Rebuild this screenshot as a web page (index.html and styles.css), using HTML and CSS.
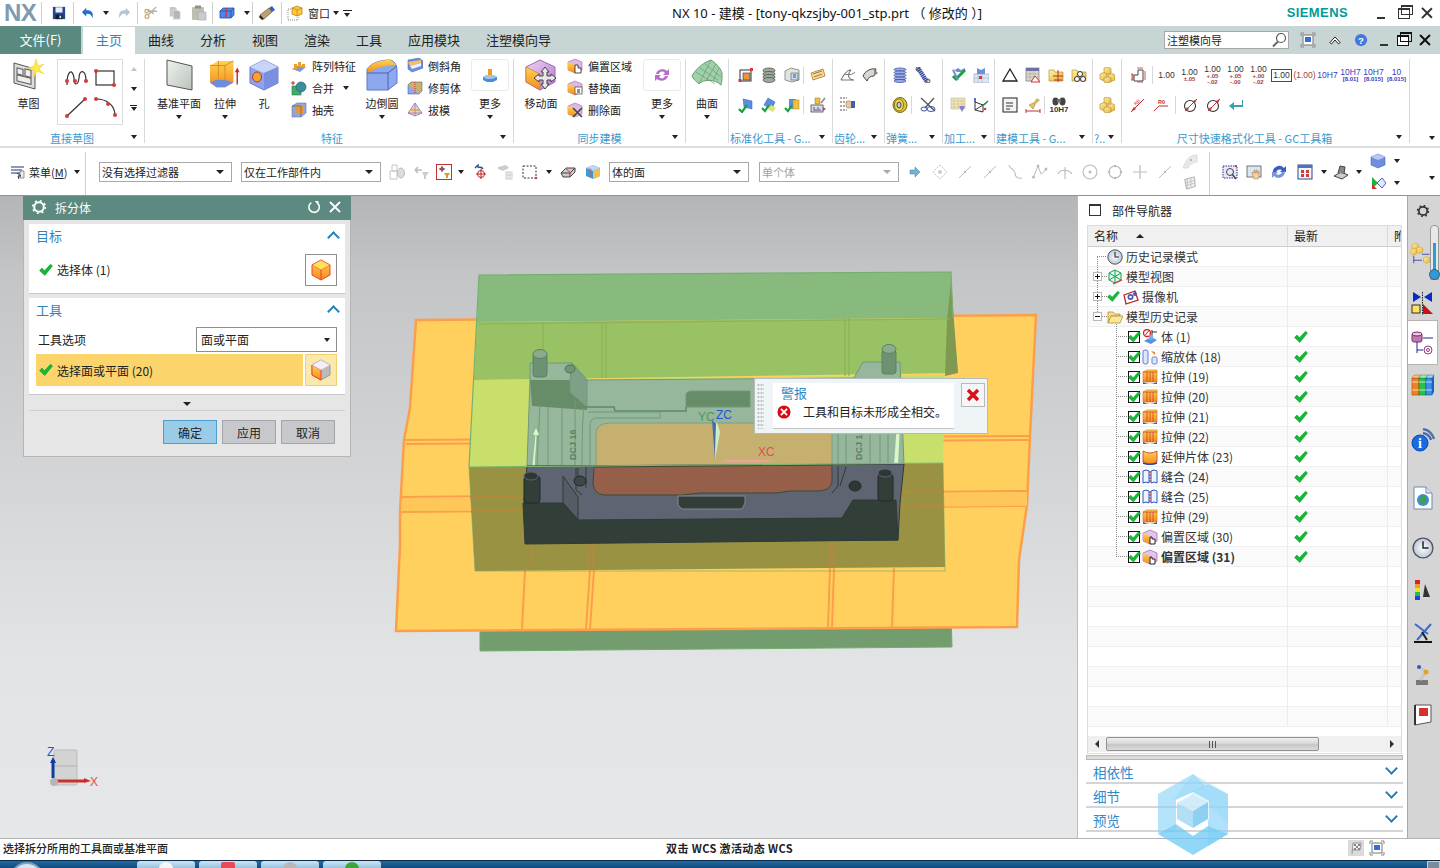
FILE: index.html
```html
<!DOCTYPE html>
<html lang="zh">
<head>
<meta charset="utf-8">
<title>NX 10 - 建模</title>
<link rel="stylesheet" href="styles.css">
</head>
<body>
<svg class="defs" width="0" height="0" aria-hidden="true">
<defs>
<linearGradient id="gOr" x1="0" y1="0" x2="0" y2="1"><stop offset="0" stop-color="#ffd34d"/><stop offset="1" stop-color="#f58a1f"/></linearGradient>
<linearGradient id="gBl" x1="0" y1="0" x2="1" y2="1"><stop offset="0" stop-color="#c9d9f7"/><stop offset="1" stop-color="#5d7fd8"/></linearGradient>
<linearGradient id="gPk" x1="0" y1="0" x2="1" y2="1"><stop offset="0" stop-color="#f0d2f2"/><stop offset="1" stop-color="#b07ad0"/></linearGradient>
<linearGradient id="gGy" x1="0" y1="0" x2="1" y2="1"><stop offset="0" stop-color="#eef2ee"/><stop offset="1" stop-color="#b9c4bb"/></linearGradient>
<linearGradient id="gYl" x1="0" y1="0" x2="1" y2="1"><stop offset="0" stop-color="#fff2a0"/><stop offset="1" stop-color="#e8b43a"/></linearGradient>
<radialGradient id="gCk"><stop offset="0" stop-color="#fff"/><stop offset="1" stop-color="#b8c6d8"/></radialGradient>

<symbol id="check" viewBox="0 0 14 13"><path d="M0.5 7 L3 4.6 L5.5 7.2 L11.5 0.8 L13.5 2.4 L5.8 12 Z" fill="#11bb33" stroke="#0a8f25" stroke-width=".5"/></symbol>
<symbol id="save" viewBox="0 0 16 16"><rect x="1" y="1" width="14" height="14" fill="#23468e"/><rect x="4" y="1.5" width="8" height="6" fill="#e8eef8"/><rect x="4" y="10" width="8" height="5" fill="#111b33"/><rect x="8.5" y="11" width="2" height="3" fill="#dde"/></symbol>
<symbol id="undo" viewBox="0 0 16 16"><path d="M1 7 L6 2 V5 C11 4 15 7 13 14 C12 10 10 8.500 6 9 V12 Z" fill="#1e6fd0"/></symbol>
<symbol id="redo" viewBox="0 0 16 16"><path d="M15 7 L10 2 V5 C5 4 1 7 3 14 C4 10 6 8.500 10 9 V12 Z" fill="#b9c4cc"/></symbol>
<symbol id="cut" viewBox="0 0 16 16"><path d="M14 1 L5 10 M15 6 L5 6 M11 9 L5 4" stroke="#aeb2a8" stroke-width="1.500" fill="none"/><circle cx="3.500" cy="12" r="2.200" fill="none" stroke="#c4b07a" stroke-width="1.500"/><circle cx="3" cy="6" r="2" fill="none" stroke="#c4b07a" stroke-width="1.500"/></symbol>
<symbol id="copy" viewBox="0 0 16 16"><path d="M2 1h6l2 2v9H2z" fill="#c5c9cc"/><path d="M6 5h6l2 2v8H6z" fill="#b2b6ba" stroke="#e8e8e8" stroke-width=".6"/></symbol>
<symbol id="paste" viewBox="0 0 16 16"><rect x="1" y="2" width="12" height="13" rx="1" fill="#bdbfb0"/><rect x="4" y="0.500" width="6" height="3" fill="#8f918a"/><rect x="7" y="7" width="8" height="8" fill="#c8ccd0" stroke="#9aa" stroke-width=".6"/></symbol>
<symbol id="sect" viewBox="0 0 16 16"><path d="M1 6 L4 3 H15 V10 L12 13 H1 Z" fill="#4f86e8" stroke="#1f4fb0" stroke-width=".8"/><path d="M1 6 H12 V13 M12 6 L15 3" fill="none" stroke="#1f4fb0" stroke-width=".8"/><path d="M7 3 V13" stroke="#e03030" stroke-width="1.400"/></symbol>
<symbol id="erase" viewBox="0 0 16 16"><path d="M1 10 L10 3 L13 7 L5 14 Z" fill="#c0a070" stroke="#6a5a40" stroke-width=".7"/><path d="M10 3 L13 1 L16 5 L13 7 Z" fill="#3060c0"/><path d="M1 10 L5 14 L3 15 L0 12Z" fill="#222"/></symbol>
<symbol id="win" viewBox="0 0 16 16"><rect x="1" y="4" width="10" height="11" fill="#fff" stroke="#888" stroke-dasharray="1 1"/><path d="M5 3 L10 1 L15 3 V9 L10 11 L5 9 Z" fill="#ffc83a" stroke="#b07a10" stroke-width=".7"/><path d="M5 3 L10 5 L15 3 M10 5V11" stroke="#b07a10" stroke-width=".6" fill="none"/></symbol>

<symbol id="sketch" viewBox="0 0 32 32"><path d="M1 4 L22 10 V30 L1 24 Z" fill="#ddd" stroke="#555"/><rect x="4" y="8" width="6" height="6" fill="#eee" stroke="#555" transform="skewY(14)"/><rect x="12" y="7" width="6" height="7" fill="#eee" stroke="#555" transform="skewY(14)"/><rect x="4" y="15" width="14" height="6" fill="#eee" stroke="#555" transform="skewY(14)"/><path d="M23 0 L25 7 L31 5 L26 10 L31 15 L24 12 L21 18 L21 11 L15 9 L21 7 Z" fill="#ffe84a" stroke="#e8c820" stroke-width=".5"/></symbol>
<symbol id="spline" viewBox="0 0 24 24"><path d="M3 19 C3 3 9 3 10 12 C10 20 14 20 15 12 C15 3 22 3 22 15" fill="none" stroke="#333" stroke-width="1.200"/><g fill="#d43a3a"><circle cx="3" cy="15" r="2"/><circle cx="11" cy="15" r="2"/><circle cx="22" cy="15" r="2"/></g></symbol>
<symbol id="rectS" viewBox="0 0 24 24"><rect x="3" y="5" width="18" height="14" fill="none" stroke="#333" stroke-width="1.200"/><circle cx="3" cy="5" r="2" fill="#d43a3a"/><circle cx="21" cy="19" r="2" fill="#d43a3a"/></symbol>
<symbol id="lineS" viewBox="0 0 24 24"><path d="M3 21 L21 4" stroke="#333" stroke-width="1.200"/><circle cx="3" cy="21" r="2" fill="#d43a3a"/><circle cx="21" cy="4" r="2" fill="#d43a3a"/></symbol>
<symbol id="arcS" viewBox="0 0 24 24"><path d="M3 4 C14 4 22 10 22 21" fill="none" stroke="#333" stroke-width="1.200"/><g fill="#d43a3a"><circle cx="3" cy="4" r="2"/><circle cx="15" cy="9" r="2"/><circle cx="22" cy="20" r="2"/></g></symbol>
<symbol id="plane" viewBox="0 0 32 32"><path d="M4 1 L29 7 V31 L4 26 Z" fill="url(#gGy)" stroke="#555" stroke-width="1"/></symbol>
<symbol id="extrude" viewBox="0 0 34 32"><path d="M1 6 L10 1 H26 V24 L17 29 H8 L1 24 Z" fill="url(#gOr)"/><path d="M10 1 V20 M17 6 V29 M1 6 H17 L26 1" fill="none" stroke="#d88a2c" stroke-width="1"/><path d="M1 24 L8 29 H17 L26 24 L17 21 L8 21 Z" fill="#6f8ed8"/><path d="M30 26 V12" stroke="#d02020" stroke-width="1.500"/><path d="M27.500 13 L30 8 L32.500 13Z" fill="#d02020"/></symbol>
<symbol id="hole" viewBox="0 0 32 32"><path d="M2 8 L16 1 L30 8 V24 L16 31 L2 24 Z" fill="#8ea4f0" stroke="#6a7cc0"/><path d="M2 8 L16 14 L30 8 L16 1Z" fill="#c8d4f8"/><path d="M16 14 V31 L30 24 V8Z" fill="#7a8fe0"/><ellipse cx="9" cy="18" rx="4.500" ry="5" fill="#f6a42c" stroke="#c23030"/></symbol>
<symbol id="edge" viewBox="0 0 32 32"><path d="M1 10 C6 3 16 1 24 1 C29 2 31 6 31 12 V24 L22 31 H1 Z" fill="#8ea8ee" stroke="#5d78c8"/><path d="M1 10 C6 3 16 1 24 1 C27 2 29 4 30 6 C22 6 10 8 3 14 Z" fill="url(#gOr)"/><path d="M1 14 H22 V31 M22 14 L31 7" fill="none" stroke="#4a62b0"/></symbol>
<symbol id="moreF" viewBox="0 0 16 14"><rect x="6" y="1" width="4" height="7" fill="#f49a28"/><path d="M1 9 L5 7 H11 L15 9 V12 L11 14 H5 L1 12Z" fill="#4a8ed0"/><path d="M5 7 H11 L15 9 L10 11 H5 L1 9Z" fill="#9ec6ea"/></symbol>
<symbol id="pattern" viewBox="0 0 16 16"><path d="M1 11 L8 7 L15 9 L9 14 Z" fill="#7a9ad8"/><g fill="#e8a030"><rect x="3" y="6" width="3" height="5"/><rect x="7" y="4" width="3" height="5"/><rect x="11" y="6" width="3" height="4"/></g></symbol>
<symbol id="unite" viewBox="0 0 16 16"><rect x="1" y="6" width="9" height="9" fill="#44aa66" stroke="#276" stroke-width=".6"/><circle cx="10" cy="7" r="5" fill="#3a8ea0" stroke="#256" stroke-width=".6"/><path d="M0 3H4M2 1V5" stroke="#d02020" stroke-width="1"/></symbol>
<symbol id="shell" viewBox="0 0 16 16"><path d="M1 4 L6 1 H15 V11 L10 15 H1Z" fill="#8da8dc" stroke="#667"  stroke-width=".5"/><rect x="5" y="4" width="7" height="7" fill="#e8953c"/><path d="M1 4 H10 V15" fill="none" stroke="#555" stroke-width=".6"/></symbol>
<symbol id="chamfer" viewBox="0 0 16 16"><path d="M1 2 L12 0 L16 3 V10 L5 14 L1 11Z" fill="#6f8ee0" stroke="#3a55a8" stroke-width=".5"/><path d="M1 4 L14 2 V5 L3 8Z" fill="#f4c060"/><path d="M3 8 L14 5 V8 L5 11Z" fill="#eef"/></symbol>
<symbol id="trim" viewBox="0 0 16 16"><rect x="1" y="5" width="11" height="9" fill="#8ea8ee" stroke="#4a62b0" stroke-width=".6"/><path d="M1 5 L4 2 H15 V11 L12 14" fill="#c8b070" stroke="#666" stroke-width=".6"/><path d="M8 2 V14" stroke="#d83030" stroke-dasharray="1 1"/></symbol>
<symbol id="draft" viewBox="0 0 16 16"><path d="M8 1 L15 11 L8 14 L1 11Z" fill="#cfd6ee" stroke="#6070a8" stroke-width=".7"/><path d="M8 1 V14 M1 11 L15 11" stroke="#d44" stroke-width=".6"/><path d="M3 8 L13 8" stroke="#f0a030" stroke-width="1.500"/></symbol>
<symbol id="offset" viewBox="0 0 16 16"><path d="M1 4 L8 1 L15 4 V12 L8 15 L1 12Z" fill="#e0b8e8" stroke="#8a4c90" stroke-width=".5"/><path d="M1 4 L8 7 V15 L1 12Z" fill="url(#gOr)"/><path d="M8 7 H11 V10 H14 V15 H8Z" fill="#fff" stroke="#222" stroke-width=".8"/></symbol>
<symbol id="replace" viewBox="0 0 16 16"><path d="M1 4 L8 1 L15 4 V12 L8 15 L1 12Z" fill="#e0b8e8" stroke="#8a4c90" stroke-width=".5"/><path d="M1 4 L8 7 V15 L1 12Z" fill="url(#gOr)"/><rect x="8" y="7" width="7" height="7" fill="#fff" stroke="#444" stroke-width=".7"/><path d="M10 10 H13 M10 12H13" stroke="#222"/></symbol>
<symbol id="deleteF" viewBox="0 0 16 16"><path d="M1 4 L8 1 L15 4 V12 L8 15 L1 12Z" fill="#e0b8e8" stroke="#8a4c90" stroke-width=".5"/><path d="M1 4 L8 7 V15 L1 12Z" fill="url(#gOr)"/><path d="M6 6 L15 15 M15 6 L6 15" stroke="#444" stroke-width="1.600"/></symbol>
<symbol id="move" viewBox="0 0 32 32"><path d="M1 8 L15 1 L30 8 V23 L15 31 L1 23Z" fill="url(#gPk)" stroke="#a066b0"/><path d="M1 8 L15 15 V31 L1 23Z" fill="url(#gOr)" stroke="#c8702c" stroke-width=".6"/><path d="M20 8 L24 13 H22 V17 H26 V15 L31 19 L26 23 V21 H22 V25 H24 L20 30 L16 25 H18 V21 H14 V23 L9 19 L14 15 V17 H18 V13 H16Z" fill="#e8e8e8" stroke="#444"/></symbol>
<symbol id="cycle" viewBox="0 0 16 16"><path d="M2 7 C3 2 10 1 13 4 L15 2 V8 H9 L11 6 C9 4 6 4 5 7Z" fill="#b86cc8"/><path d="M14 9 C13 14 6 15 3 12 L1 14 V8 H7 L5 10 C7 12 10 12 11 9Z" fill="#b86cc8"/></symbol>
<symbol id="surface" viewBox="0 0 32 32"><path d="M1 17 C6 8 14 3 20 1 C26 5 30 10 31 14 C31 20 31 23 30 26 C24 20 12 20 8 25 C5 22 2 20 1 17Z" fill="#9fd0a8" stroke="#6a9c78"/><g stroke="#5f9270" stroke-width=".6" fill="none"><path d="M5 13 L24 25 M9 9 L27 21 M14 5 L30 18"/><path d="M20 1 L8 25 M25 5 L15 22 M28 9 L22 22"/></g></symbol>

<symbol id="s1" viewBox="0 0 16 16"><rect x="2" y="3" width="11" height="11" fill="none" stroke="#333"/><rect x="5" y="6" width="7" height="7" fill="#e8953c" stroke="#333" stroke-width=".6"/><g fill="#d43a3a"><rect x="0.500" y="12" width="3" height="3"/><rect x="12" y="1" width="3" height="3"/></g></symbol>
<symbol id="s2" viewBox="0 0 16 16"><g fill="#9aab9a" stroke="#444" stroke-width=".7"><ellipse cx="8" cy="3.500" rx="6" ry="2.500"/><ellipse cx="8" cy="7" rx="6" ry="2.500"/><ellipse cx="8" cy="10" rx="6" ry="2.500"/><ellipse cx="8" cy="13" rx="6" ry="2.500"/></g></symbol>
<symbol id="s3" viewBox="0 0 16 16"><g fill="#dfe5df" stroke="#555" stroke-width=".6"><path d="M1 4 L7 1 L15 3 V13 L8 15 L1 13Z"/></g><rect x="7" y="6" width="7" height="7" fill="#c8d8f0" stroke="#446"  stroke-width=".5"/><path d="M9 8H12M9 10H12" stroke="#245" stroke-width=".8"/></symbol>
<symbol id="s4" viewBox="0 0 16 16"><path d="M1 6 L13 2 L15 9 L3 13Z" fill="#ffd88a" stroke="#9a6a20" stroke-width=".7"/><path d="M3 7 L12 4 M4 10L12 7" stroke="#666" stroke-width=".8"/></symbol>
<symbol id="s5" viewBox="0 0 16 16"><path d="M5 2 L14 4 V12 L6 10Z" fill="#5a8ee0" stroke="#2c5ab0" stroke-width=".5"/><path d="M1 12 L4 15 L9 8" stroke="#17a33a" stroke-width="2.200" fill="none"/></symbol>
<symbol id="s6" viewBox="0 0 16 16"><path d="M7 1 L14 5 L11 12 L3 8Z" fill="#5a8ee0" stroke="#2c5ab0" stroke-width=".5"/><path d="M10 8 L15 11 L12 15 L6 12Z" fill="#e0e080"/><path d="M1 11 L4 14 L8 8" stroke="#17a33a" stroke-width="2.200" fill="none"/></symbol>
<symbol id="s7" viewBox="0 0 16 16"><rect x="5" y="2" width="7" height="10" fill="#5a8ee0"/><rect x="9" y="3" width="6" height="9" fill="#f0c040" stroke="#b08020" stroke-width=".5"/><path d="M1 11 L4 14 L8 8" stroke="#17a33a" stroke-width="2.200" fill="none"/></symbol>
<symbol id="s8" viewBox="0 0 16 16"><rect x="1" y="8" width="12" height="7" fill="#ddd" stroke="#333" stroke-width=".7"/><path d="M3 11H5M7 11H9M3 13H11" stroke="#6040a0"/><path d="M5 1 H10 V7 H5Z" fill="#f0c040" stroke="#9a7010" stroke-width=".5"/><path d="M11 6 L15 1" stroke="#888" stroke-width="1.500"/><path d="M13 10 L16 12 L13 14Z" fill="#b040a0"/></symbol>
<symbol id="s9" viewBox="0 0 16 16"><path d="M1 13 C5 5 8 3 11 3 C8 6 7 12 13 13" fill="none" stroke="#555"/><path d="M4 8 C6 6 10 10 15 5" fill="none" stroke="#777"/><path d="M1 13H14" stroke="#777"/></symbol>
<symbol id="s10" viewBox="0 0 16 16"><path d="M1 9 C3 4 9 1 14 2 L12 9 C8 9 6 11 5 14 Z" fill="#d8d8d0" stroke="#444"/><path d="M12 2 L16 6 L12 9" fill="#888"/></symbol>
<symbol id="s11" viewBox="0 0 16 16"><path d="M0 1H7M0 5H7M0 9H7M0 13H7" stroke="#555" stroke-dasharray="2 1"/><rect x="6" y="4" width="6" height="7" rx="2" fill="#e8c8a0" stroke="#876"  stroke-width=".5"/><rect x="11" y="4" width="4" height="7" fill="#4a5ab0"/></symbol>
<symbol id="spring" viewBox="0 0 16 16"><g fill="#9ab0e8" stroke="#30409a" stroke-width=".7"><ellipse cx="8" cy="2.500" rx="6" ry="1.500"/><ellipse cx="8" cy="5.500" rx="6" ry="1.500"/><ellipse cx="8" cy="8.500" rx="6" ry="1.500"/><ellipse cx="8" cy="11.500" rx="6" ry="1.500"/><ellipse cx="8" cy="14" rx="6" ry="1.500"/></g></symbol>
<symbol id="spring2" viewBox="0 0 16 16"><path d="M3 1 L12 15" stroke="#3048a8" stroke-width="4.500" stroke-dasharray="1.500 .5"/><circle cx="3" cy="2" r="2" fill="none" stroke="#555"/><circle cx="13" cy="14" r="2" fill="none" stroke="#555"/></symbol>
<symbol id="washer" viewBox="0 0 16 16"><ellipse cx="8" cy="8" rx="7" ry="7.500" fill="#d8c040" stroke="#7a6a10"/><ellipse cx="7" cy="8" rx="4.500" ry="6" fill="#eed860" stroke="#8a7a10"/><ellipse cx="7" cy="8" rx="2" ry="3" fill="#ccc" stroke="#444"/></symbol>
<symbol id="clips" viewBox="0 0 16 16"><path d="M1 1 L15 14 M14 1 L5 11" stroke="#555" stroke-width="1.300"/><ellipse cx="11" cy="12" rx="4" ry="2.500" fill="none" stroke="#3a55a8"/><ellipse cx="4" cy="12" rx="3" ry="2" fill="none" stroke="#3a55a8"/></symbol>
<symbol id="m1" viewBox="0 0 16 16"><path d="M1 1 L5 3 L8 1 L11 3 L15 1 V5 L7 5 Z" fill="#6f8ed8"/><path d="M3 9 L6 12 L15 3" stroke="#17a33a" stroke-width="3" fill="none"/><path d="M3 3 L8 13" stroke="#6f8ed8" stroke-width="2"/></symbol>
<symbol id="m2" viewBox="0 0 16 16"><rect x="1" y="7" width="15" height="9" fill="#dfe7f4" stroke="#8a9ac0" stroke-width=".6"/><path d="M5 7V16M9 7V16M1 11H16" stroke="#9ab" stroke-width=".5"/><path d="M4 1 L8 3 L12 1 V7 H4Z" fill="#6f8ed8"/><rect x="6" y="9" width="3" height="3" fill="#d43a3a"/></symbol>
<symbol id="m3" viewBox="0 0 16 16"><rect x="1" y="1" width="14" height="11" fill="#f4e6a8" stroke="#aaa" stroke-width=".5"/><path d="M1 4H15M1 7H15M1 10H15M4 1V12M8 1V12M12 1V12" stroke="#bbb" stroke-width=".5"/><path d="M9 9 L15 9 L12 15Z" fill="#8a7ad0"/></symbol>
<symbol id="m4" viewBox="0 0 16 16"><path d="M2 5 L10 8 L15 4 M2 5 L2 13 L10 15 V8 M2 13 L10 8" fill="none" stroke="#333"/><path d="M11 8L15 4" stroke="#20a040" stroke-width="1.500"/><path d="M2 1V5" stroke="#2040c0" stroke-width="1.500"/><circle cx="12" cy="12" r="1.300" fill="#d43a3a"/></symbol>
<symbol id="tri" viewBox="0 0 16 16"><path d="M8 2 L15 14 H1Z" fill="none" stroke="#222" stroke-width="1.300"/></symbol>
<symbol id="table" viewBox="0 0 16 16"><rect x="1" y="1" width="13" height="13" fill="#dcd8c8" stroke="#777" stroke-width=".7"/><rect x="1" y="1" width="13" height="3" fill="#7070a8"/><path d="M1 7H14M1 10H14M5 4V14M9 4V14" stroke="#999" stroke-width=".5"/><path d="M10 9 L15 15 H6Z" fill="#fff" stroke="#d03030"/></symbol>
<symbol id="folderX" viewBox="0 0 16 16"><path d="M1 3 H6 L7 5 H15 V14 H1Z" fill="url(#gYl)" stroke="#a88530" stroke-width=".6"/><path d="M10 3V15M5 9H15M6 13H14" stroke="#c03030"/></symbol>
<symbol id="folderC" viewBox="0 0 16 16"><path d="M1 3 H6 L7 5 H15 V14 H1Z" fill="url(#gYl)" stroke="#a88530" stroke-width=".6"/><circle cx="6" cy="12" r="2.500" fill="#fff" stroke="#333"/><circle cx="12" cy="12" r="2.500" fill="#fff" stroke="#333"/><circle cx="9" cy="7" r="2.500" fill="#fff" stroke="#333"/></symbol>
<symbol id="notes" viewBox="0 0 16 16"><rect x="1" y="1" width="14" height="14" fill="#f4f4f4" stroke="#333" stroke-width="1.100"/><path d="M4 6H11M4 9H11M4 12H8" stroke="#333"/></symbol>
<symbol id="broom" viewBox="0 0 16 16"><path d="M1 14H15" stroke="#c03030"/><path d="M1 12V16M15 12V16" stroke="#c03030"/><path d="M12 1 L15 3 L10 8 L8 6Z" fill="#d8b860"/><path d="M4 8 L8 6 L10 8 L8 12 Z" fill="#e8c840" stroke="#876" stroke-width=".5"/></symbol>
<symbol id="binoc" viewBox="0 0 16 10"><ellipse cx="4" cy="5" rx="3.500" ry="4.500" fill="#444"/><ellipse cx="12" cy="5" rx="3.500" ry="4.500" fill="#444"/><rect x="6" y="2" width="4" height="4" fill="#777"/></symbol>
<symbol id="blocks" viewBox="0 0 16 16"><g fill="url(#gYl)" stroke="#a88530" stroke-width=".6"><path d="M5 1 L9 0 L12 1.500 V6 L8 7.500 L5 6Z"/><path d="M1 7 L5 5.500 L8 7 V12 L4 13.500 L1 12Z"/><path d="M9 8 L13 6.500 L16 8 V13 L12 14.500 L9 13Z"/><path d="M5 11 L9 9.500 L12 11 V15 L8 16 L5 15Z"/></g></symbol>
<symbol id="dimS" viewBox="0 0 16 16"><path d="M4 14 V8 H8 V3 H13 V14Z" fill="#fff" stroke="#444"/><path d="M1 7 H3 V13 H1 M2 7 V13" stroke="#c03030" fill="none" stroke-width=".8"/><path d="M7 1H13M7 15H13M15 4V13" stroke="#c03030" stroke-width=".8"/></symbol>
<symbol id="r1" viewBox="0 0 16 16"><path d="M1 15 L14 2" stroke="#c03030"/><path d="M1 15 L4 10 L6 12Z" fill="#c03030"/><text x="4" y="8" font-size="5" font-family="Liberation Sans" fill="#c03030" transform="rotate(-45 6 6)">R8</text></symbol>
<symbol id="r2" viewBox="0 0 16 16"><path d="M1 14 L6 9 H15" stroke="#c03030" fill="none"/><text x="5" y="7" font-size="5.500" font-weight="bold" font-family="Liberation Sans" fill="#c03030">R0</text></symbol>
<symbol id="d1" viewBox="0 0 16 16"><circle cx="8" cy="9" r="5.500" fill="none" stroke="#333" stroke-width="1.100"/><path d="M3 14 L15 2" stroke="#c03030"/><path d="M15 2 L11 4 L13 6Z M3 14 L7 12 L5 10Z" fill="#c03030"/></symbol>
<symbol id="ret" viewBox="0 0 16 16"><path d="M14 3 V8 H6 V5 L1 9 L6 13 V10 H15 V3Z" fill="#3aa0a8"/></symbol>

<symbol id="menuI" viewBox="0 0 16 16"><path d="M1 3H14M1 6H12M1 9H10" stroke="#6a7a9a" stroke-width="1.300"/><path d="M10 7 H14 V14 H10Z" fill="#eee" stroke="#555" stroke-width=".6"/><path d="M7 9 L11 12 L8 12 L9 15" fill="none" stroke="#333"/></symbol>
<symbol id="gr1" viewBox="0 0 16 16"><path d="M1 7H8V15H1Z M3 1 H8V7H3Z" fill="none" stroke="#c4c4c4"/><ellipse cx="12" cy="9" rx="3.500" ry="5" fill="#ddd" stroke="#bbb"/></symbol>
<symbol id="gr2" viewBox="0 0 16 16"><path d="M1 6 L4 3 M1 6 L4 9 M1 6 H8" stroke="#bbb" stroke-width="1.500"/><path d="M8 8 H15 L12 12 V15 L10 15 V12Z" fill="#ccc"/></symbol>
<symbol id="filt" viewBox="0 0 16 16"><rect x="0.500" y="0.500" width="15" height="15" fill="#fff" stroke="#c23030"/><path d="M6 2V8M3 5H9" stroke="#444"/><circle cx="6" cy="5" r="1.500" fill="none" stroke="#a33"/><path d="M8 9 H14 L12 12 V14 H10 V12Z" fill="#d8a020"/></symbol>
<symbol id="undoT" viewBox="0 0 16 16"><path d="M8 5V15M3 10H13" stroke="#c02020" stroke-width="1"/><circle cx="8" cy="10" r="3.500" fill="none" stroke="#c02020"/><path d="M2 4 L5 1 V3 C7 3 9 3 10 5" fill="none" stroke="#2a4a90" stroke-width="1.300"/></symbol>
<symbol id="gr3" viewBox="0 0 16 16"><path d="M1 3 L9 1 L12 4 L6 7 L1 5Z" fill="#ccc"/><rect x="9" y="8" width="6" height="7" fill="none" stroke="#ccc"/><path d="M11 8V15M13 8V15M9 11H15" stroke="#ccc"/></symbol>
<symbol id="rectSel" viewBox="0 0 16 16"><rect x="1" y="2" width="13" height="12" fill="none" stroke="#333" stroke-dasharray="2 1.500"/><circle cx="14" cy="14" r="1.300" fill="#d43a3a"/></symbol>
<symbol id="curve3d" viewBox="0 0 16 16"><path d="M1 9 L6 4 H15 L15 8 L10 13 H3Z" fill="#ccc" stroke="#444"/><path d="M1 9 H10 V13 M10 9 L15 4" fill="none" stroke="#444"/><path d="M5 4 L11 9" stroke="#d43a3a"/></symbol>
<symbol id="cube" viewBox="0 0 16 16"><path d="M1 4 L8 1 L15 4 V12 L8 15 L1 12Z" fill="#3a9ad8"/><path d="M1 4 L8 7 L15 4 L8 1Z" fill="#c0d8f8"/><path d="M8 7V15L15 12V4Z" fill="#f0c050"/><path d="M3 5H6V13" stroke="#e05050" fill="none" stroke-width=".7"/></symbol>
<symbol id="arrowB" viewBox="0 0 12 12"><path d="M1 4H6V1L11 6L6 11V8H1Z" fill="#6fb4d8" stroke="#4a7a98" stroke-width=".5"/></symbol>
<symbol id="gr4" viewBox="0 0 16 16"><path d="M8 1L11 4 15 8 11 12 8 15 5 12 1 8 5 4Z" fill="none" stroke="#bbb" stroke-dasharray="1.500 1"/><circle cx="8" cy="8" r="2" fill="#ccc"/></symbol>
<symbol id="gr5" viewBox="0 0 16 16"><path d="M2 14L14 2" stroke="#bbb"/><circle cx="8" cy="8" r="1.200" fill="#bbb"/></symbol>
<symbol id="gr6" viewBox="0 0 16 16"><path d="M2 1 C3 6 7 4 8 9 C8 13 11 15 15 14" fill="none" stroke="#bbb" stroke-width="1.100"/></symbol>
<symbol id="gr7" viewBox="0 0 16 16"><path d="M1 14L6 2L9 10L15 5" fill="none" stroke="#bbb"/><circle cx="6" cy="2" r="1.500" fill="#bbb"/><circle cx="1.500" cy="13" r="1.500" fill="#bbb"/><circle cx="14" cy="5" r="1.500" fill="#bbb"/></symbol>
<symbol id="gr8" viewBox="0 0 16 16"><path d="M8 3V15M1 10 C3 5 12 5 15 10" fill="none" stroke="#bbb" stroke-width="1.100"/></symbol>
<symbol id="gr9" viewBox="0 0 16 16"><circle cx="8" cy="8" r="7" fill="none" stroke="#bbb" stroke-width="1.100"/><circle cx="8" cy="8" r="1.500" fill="#bbb"/></symbol>
<symbol id="gr10" viewBox="0 0 16 16"><circle cx="8" cy="8" r="6" fill="none" stroke="#bbb" stroke-width="1.100"/><g fill="#bbb"><circle cx="8" cy="2" r="1.300"/><circle cx="8" cy="14" r="1.300"/><circle cx="2" cy="8" r="1.300"/><circle cx="14" cy="8" r="1.300"/></g></symbol>
<symbol id="gr11" viewBox="0 0 16 16"><path d="M8 1V15M1 8H15" stroke="#bbb" stroke-width="1.200"/></symbol>
<symbol id="gr12" viewBox="0 0 16 16"><path d="M1 14 C5 3 9 1 15 1 V8 C12 8 8 10 6 14Z" fill="#e8e8e8" stroke="#ddd"/><circle cx="9" cy="6" r="1" fill="#aaa"/></symbol>
<symbol id="gr13" viewBox="0 0 16 16"><path d="M2 4 L13 1 L14 12 L4 15Z" fill="#eee" stroke="#aaa"/><path d="M5 3V14M9 2V13M2 8L14 5M3 11L14 8" stroke="#aaa" stroke-width=".6"/></symbol>
<symbol id="v1" viewBox="0 0 16 16"><rect x="1" y="2" width="14" height="12" fill="#e8e8f4" stroke="#2030a0" stroke-dasharray="1.500 1"/><circle cx="8" cy="8" r="3.500" fill="none" stroke="#444"/><path d="M10 10L14 15" stroke="#444" stroke-width="1.400"/><rect x="13" y="1" width="2" height="2" fill="#d43a3a"/></symbol>
<symbol id="v2" viewBox="0 0 16 16"><rect x="1" y="2" width="14" height="11" fill="#dbe6f4" stroke="#777"/><path d="M8 15 C7 12 6 10 6 8 L8 9 V6 H9 V9 H10 V6 H11 V9 H12 V7 H13 V12 L12 15Z" fill="#f0d0a8" stroke="#a07040" stroke-width=".5"/></symbol>
<symbol id="v3" viewBox="0 0 16 16"><path d="M2 10 A6.500 6.500 0 0 1 13 4 L15 2 V8 H9 L11 6 A4 4 0 0 0 5 9Z" fill="#3a5ac8"/><path d="M14 7 A6.500 6.500 0 0 1 3 12 L1 14 V8 H7 L5 10 A4 4 0 0 0 11 8Z" fill="#7a96d8"/></symbol>
<symbol id="v4" viewBox="0 0 16 16"><rect x="1" y="1" width="14" height="14" fill="#f4f6fb" stroke="#2a4a90"/><rect x="1" y="1" width="14" height="3" fill="#4a72c8"/><g fill="#d43a3a"><rect x="4" y="6" width="3" height="3"/><rect x="9" y="6" width="3" height="3"/><rect x="4" y="10" width="3" height="3"/><rect x="9" y="10" width="3" height="3"/></g></symbol>
<symbol id="v5" viewBox="0 0 16 16"><path d="M1 12 L8 8 L15 11 L9 15 Z" fill="#ccc" stroke="#444"/><path d="M5 9 L7 2 L12 3 L11 10" fill="#888" stroke="#444"/></symbol>
<symbol id="v6" viewBox="0 0 16 16"><path d="M1 4 L8 1 L15 4 V12 L8 15 L1 12Z" fill="#6f8ee0" stroke="#3a55a8" stroke-width=".5"/><path d="M1 4 L8 7 L15 4 L8 1Z" fill="#b8c8f0"/></symbol>
<symbol id="v7" viewBox="0 0 16 16"><path d="M2 2 V14 L8 8Z" fill="#20b040"/><path d="M2 14 V9 L7 14Z" fill="#d03030"/><path d="M7 8 L12 3 L16 8 L12 13Z" fill="#e0e8fa" stroke="#4466c0"/></symbol>

<symbol id="clock" viewBox="0 0 16 16"><circle cx="8" cy="8" r="7.200" fill="url(#gCk)" stroke="#555"/><path d="M8 3V8H12" stroke="#222" fill="none" stroke-width="1.100"/></symbol>
<symbol id="mview" viewBox="0 0 16 16"><path d="M8 1 L14 4 V11 L8 14 L2 11 V4Z M2 4 L14 11 M14 4 L2 11 M8 1V14" fill="#e8f8ec" stroke="#14a05a" stroke-width="1"/><path d="M6 15 L15 11" stroke="#e03030" stroke-width="1.300"/></symbol>
<symbol id="cam" viewBox="0 0 16 16"><path d="M1 6 L12 2 L15 11 L3 15Z" fill="#fff" stroke="#c02020" stroke-width="1.300"/><circle cx="7.500" cy="8" r="3" fill="#4a5ab0"/><circle cx="7.500" cy="8" r="1.300" fill="#fff"/><circle cx="12" cy="5" r="2" fill="#4a5ab0"/></symbol>
<symbol id="folderO" viewBox="0 0 16 16"><path d="M1 3 H6 L8 5 H13 V7 H4 L1 14Z" fill="#f6dd8a" stroke="#a88530" stroke-width=".7"/><path d="M4 7 H16 L13 14 H1Z" fill="#fbe79a" stroke="#a88530" stroke-width=".7"/></symbol>
<symbol id="fBody" viewBox="0 0 16 16"><circle cx="5" cy="4" r="3.500" fill="#fff" stroke="#d02020" stroke-width="1.300"/><path d="M3 6.500 L7 1.500" stroke="#d02020"/><path d="M10 1V6M10 3H15" stroke="#333"/><path d="M2 12 L9 8 L15 11 L9 15Z" fill="#5a8ee0"/><rect x="7" y="6" width="4" height="5" fill="#7aaae8"/></symbol>
<symbol id="fScale" viewBox="0 0 16 16"><rect x="1" y="1" width="5" height="14" rx="2" fill="#dce6fa" stroke="#6a7ad8"/><rect x="10" y="8" width="5" height="7" rx="1.500" fill="#dce6fa" stroke="#6a7ad8"/><path d="M9 2 L13 6 L13 3Z" fill="#f08020"/></symbol>
<symbol id="fExt" viewBox="0 0 16 16"><path d="M1 3 L5 1 H15 V13 H1Z" fill="url(#gOr)" stroke="#d07020" stroke-width=".6"/><path d="M5 3V13M8 3V13M11 3V13M1 3H15" stroke="#c03030" stroke-width=".7"/><path d="M1 13 Q8 17 15 13 V15 H1Z" fill="#3a5ac0"/></symbol>
<symbol id="fEx2" viewBox="0 0 16 16"><path d="M1 2 Q8 6 15 2 V13 Q8 17 1 13Z" fill="url(#gOr)" stroke="#c03030" stroke-width=".8"/><path d="M1 14 Q8 17 15 14" stroke="#2a4ab0" stroke-width="1.400" fill="none"/></symbol>
<symbol id="fSew" viewBox="0 0 16 16"><path d="M1 2 Q4 0 7 2 V14 Q4 12 1 14Z" fill="#eef4ff" stroke="#2a5ac0"/><path d="M15 2 Q12 0 9 2 V14 Q12 12 15 14Z" fill="#eef4ff" stroke="#2a5ac0"/><path d="M7 3H9M7 6H9M7 9H9M7 12H9" stroke="#c02020" stroke-width="1.100"/></symbol>
<symbol id="fOff" viewBox="0 0 16 16"><path d="M1 4 L8 1 L15 4 V12 L8 15 L1 12Z" fill="#e6c3ec" stroke="#8a4c90" stroke-width=".6"/><path d="M1 4 L8 7 V15 L1 12Z" fill="url(#gOr)"/><path d="M8 8 H10 V10 H13 V15 H8Z" fill="#fff" stroke="#222"/></symbol>
<symbol id="cubeY" viewBox="0 0 22 22"><path d="M2 6 L11 1 L20 6 V16 L11 21 L2 16Z" fill="url(#gOr)" stroke="#ef4030"/><path d="M2 6 L11 11 L20 6 L11 1Z" fill="#ffe25c" stroke="#ef4030" stroke-width=".5"/><path d="M11 11V21" stroke="#ef4030"/></symbol>
<symbol id="cubeW" viewBox="0 0 22 22"><path d="M2 6 L11 1 L20 6 V16 L11 21 L2 16Z" fill="#bbb" stroke="#999"/><path d="M2 6 L11 11 V21 L2 16Z" fill="url(#gOr)" stroke="#ef4030"/><path d="M2 6 L11 11 L20 6 L11 1Z" fill="#f4eef8" stroke="#c8b8d8" stroke-width=".5"/></symbol>
<symbol id="gear" viewBox="0 0 16 16"><circle cx="8" cy="8" r="4.800" fill="none" stroke="currentColor" stroke-width="2"/><circle cx="8" cy="8" r="6.300" fill="none" stroke="currentColor" stroke-width="1.600" stroke-dasharray="2 2.950"/></symbol>
<symbol id="tAsm" viewBox="0 0 32 32"><g fill="url(#gYl)" stroke="#c89a20" stroke-width=".7"><path d="M3 2 L7 0 L11 2 V7 L7 9 L3 7Z"/><path d="M1 9 L5 7 L9 9 V14 L5 16 L1 14Z"/><path d="M9 7 L13 5 L17 7 V12 L13 14 L9 12Z"/><path d="M18 20 L22 18 L26 20 V25 L22 27 L18 25Z"/></g><path d="M16 15 H26 M5 17 V27 M5 23 H16" stroke="#1a2a9a" fill="none"/></symbol>
<symbol id="tCon" viewBox="0 0 24 24"><path d="M2 1 L10 6 L2 11Z M21 1 L13 6 L21 11Z" fill="#0d28c8"/><rect x="1" y="14" width="8" height="8" fill="#ffe15a" stroke="#333"/><path d="M12 13 V23 H22Z" fill="#c01414"/><path d="M11.500 1V24" stroke="#222" stroke-dasharray="1.500 1"/></symbol>
<symbol id="tDb" viewBox="0 0 24 24"><rect x="1" y="2" width="10" height="9" rx="2" fill="#c07cb0" stroke="#7a2a6a"/><ellipse cx="6" cy="3" rx="5" ry="2" fill="#ecc8e0" stroke="#7a2a6a"/><path d="M12 7H22M6 11V22M6 19H12" stroke="#1a2a9a" fill="none"/><circle cx="17" cy="19" r="4" fill="none" stroke="#8a3a80"/><circle cx="17" cy="19" r="1.500" fill="none" stroke="#8a3a80"/></symbol>
<symbol id="tBooks" viewBox="0 0 24 22"><rect x="1" y="4" width="7" height="17" fill="#f08020" stroke="#a04a10" stroke-width=".6"/><path d="M1 4 L3 1 H10 L8 4Z" fill="#f8c080" stroke="#a04a10" stroke-width=".4"/><path d="M1 8H8M1 16H8" stroke="#fff" stroke-width=".7"/><rect x="8" y="4" width="7" height="17" fill="#2cc04a" stroke="#108020" stroke-width=".6"/><path d="M8 4 L10 1 H17 L15 4Z" fill="#a8e8b0" stroke="#108020" stroke-width=".4"/><path d="M8 8H15M8 16H15" stroke="#fff" stroke-width=".7"/><rect x="15" y="4" width="6" height="17" fill="#3a90ea" stroke="#1050a0" stroke-width=".6"/><path d="M15 4 L17 1 H23 L21 4Z" fill="#a8d0f8" stroke="#1050a0" stroke-width=".4"/><path d="M21 4 L23 1 V18 L21 21Z" fill="#2060c0"/><path d="M15 8H21M15 16H21" stroke="#fff" stroke-width=".7"/></symbol>
<symbol id="tInfo" viewBox="0 0 24 24"><circle cx="9" cy="15" r="8" fill="#1a6ae0" stroke="#0a4ab0"/><text x="9" y="20" font-size="14" font-weight="bold" text-anchor="middle" font-family="Liberation Serif" fill="#fff">i</text><path d="M12 5 A10 10 0 0 1 20 12 M12 1 A14 14 0 0 1 23 11" fill="none" stroke="#4e6ea8" stroke-width="2.400"/></symbol>
<symbol id="tWeb" viewBox="0 0 20 24"><path d="M1 1H13L19 7V23H1Z" fill="#fff" stroke="#6a8ab0"/><path d="M13 1V7H19" fill="#d8e4f4" stroke="#6a8ab0"/><circle cx="10" cy="14" r="6" fill="#3a8ed8"/><path d="M7 11 L12 10 L14 14 L10 19 L7 15Z" fill="#43a048"/></symbol>
<symbol id="tColor" viewBox="0 0 20 22"><rect x="2" y="1" width="5" height="4" fill="#e02020"/><rect x="2" y="5" width="5" height="4" fill="#f0a020"/><rect x="2" y="9" width="5" height="4" fill="#f0e020"/><rect x="2" y="13" width="5" height="4" fill="#20c040"/><rect x="2" y="17" width="5" height="4" fill="#2040e0"/><path d="M12 5 L17 18 H10Z" fill="#333"/></symbol>
<symbol id="tRobot" viewBox="0 0 22 22"><path d="M3 2 L16 12 M19 2 L5 18" stroke="#3a6ad0" stroke-width="2"/><path d="M2 20 H20" stroke="#111" stroke-width="2"/><path d="M10 10 L15 18" stroke="#222" stroke-width="2"/></symbol>
<symbol id="tArm" viewBox="0 0 22 22"><rect x="4" y="16" width="12" height="5" fill="#777"/><path d="M8 16 L14 8 L7 3" stroke="#c8c8c8" stroke-width="3" fill="none"/><circle cx="14" cy="8" r="2.500" fill="#e8a020"/><circle cx="7" cy="3" r="2" fill="#2a5ac0"/></symbol>
<symbol id="tBook" viewBox="0 0 22 22"><path d="M3 1H19V18L3 21Z" fill="#fff" stroke="#555"/><rect x="7" y="4" width="9" height="8" fill="#d83030"/><path d="M3 1V21" stroke="#333" stroke-width="2"/></symbol>
<symbol id="frame" viewBox="0 0 16 16"><path d="M1 4V1H4M12 1H15V4M15 12V15H12M4 15H1V12" fill="none" stroke="#888"/><rect x="3" y="3" width="10" height="10" fill="#fff" stroke="#777"/><rect x="5" y="5" width="6" height="5" fill="#3a6ad8"/></symbol>
</defs>
</svg>

<header class="titlebar">
  <div class="qat">
    <span class="nx">NX</span><i class="bar"></i>
    <div class="q w31 pl3"><svg class="i14"><use href="#save"/></svg></div><i class="bar"></i>
    <div class="q w28"><svg class="i14"><use href="#undo"/></svg></div><i class="tri w8"></i><div class="q w27"><svg class="i14"><use href="#redo"/></svg></div><i class="bar"></i>
    <div class="q w26"><svg class="i14"><use href="#cut"/></svg></div><div class="q w22"><svg class="i14"><use href="#copy"/></svg></div><div class="q w26"><svg class="i16"><use href="#paste"/></svg></div><i class="bar"></i>
    <div class="q w28"><svg class="i16"><use href="#sect"/></svg></div><i class="tri w11"></i><i class="bar"></i>
    <div class="q w28"><svg class="i16"><use href="#erase"/></svg></div><i class="bar"></i>
    <div class="q w25"><svg class="i16"><use href="#win"/></svg></div><span class="qat-text">窗口</span><i class="tri w12"></i><span class="custom"></span>
  </div>
  <div class="doc-title">NX 10 - 建模 - [tony-qkzsjby-001_stp.prt （ 修改的 ）]</div>
  <div class="siemens">SIEMENS</div>
  <div class="winbtns"><i class="wb-min"></i><i class="wb-max"></i><i class="wb-close"></i></div>
</header>

<nav class="tabs">
  <div class="tab file">文件(F)</div>
  <div class="tab active">主页</div>
  <div class="tab">曲线</div>
  <div class="tab">分析</div>
  <div class="tab">视图</div>
  <div class="tab">渲染</div>
  <div class="tab">工具</div>
  <div class="tab">应用模块</div>
  <div class="tab tab-last">注塑模向导</div>
  <div class="tabs-right">
    <div class="search"><span>注塑模向导</span><svg class="i16" viewBox="0 0 16 16"><circle cx="10" cy="6" r="4.500" fill="#fff" stroke="#555" stroke-width="1.200"/><path d="M7 9.500 L2 14.500" stroke="#666" stroke-width="2"/></svg></div>
    <svg class="i16 fr-top"><use href="#frame"/></svg>
    <svg class="i14 tb-ic" viewBox="0 0 16 16"><path d="M2 11 L8 4.500 L14 11 L12 12.500 L8 8 L4 12.500Z" fill="#fff" stroke="#222" stroke-width="1.100"/></svg>
    <svg class="i14 tb-ic" viewBox="0 0 16 16"><circle cx="8" cy="8" r="7" fill="#4478e0"/><text x="8" y="12" font-size="11" font-weight="bold" text-anchor="middle" font-family="Liberation Sans" fill="#fff">?</text></svg>
    <div class="winbtns inner"><i class="wb-min"></i><i class="wb-max"></i><i class="wb-close"></i></div>
  </div>
</nav>

<section class="ribbon">
  <div class="g g1">
    <div class="g-body">
      <div class="big w57"><svg class="ic32"><use href="#sketch"/></svg><span class="lab">草图</span></div>
      <div class="gallery"><svg class="i24"><use href="#spline"/></svg><svg class="i24"><use href="#rectS"/></svg><svg class="i24"><use href="#lineS"/></svg><svg class="i24"><use href="#arcS"/></svg></div>
      <div class="gal-nav"><i class="tri up light"></i><i class="tri"></i><i class="tri lined"></i></div>
    </div>
    <div class="g-foot"><span>直接草图</span><i class="tri"></i></div>
  </div>
  <div class="g g2">
    <div class="g-body">
      <div class="big w56"><svg class="ic32"><use href="#plane"/></svg><span class="lab">基准平面</span><i class="tri"></i></div>
      <div class="big w36"><svg class="ic32"><use href="#extrude"/></svg><span class="lab">拉伸</span><i class="tri"></i></div>
      <div class="big w42"><svg class="ic32"><use href="#hole"/></svg><span class="lab">孔</span></div>
      <div class="smalls w77 col-a">
        <div class="sm"><svg class="i16"><use href="#pattern"/></svg><span>阵列特征</span></div>
        <div class="sm"><svg class="i16"><use href="#unite"/></svg><span>合并</span><i class="tri"></i></div>
        <div class="sm"><svg class="i16"><use href="#shell"/></svg><span>抽壳</span></div>
      </div>
      <div class="big w40"><svg class="ic32"><use href="#edge"/></svg><span class="lab">边倒圆</span><i class="tri"></i></div>
      <div class="smalls w66 col-b">
        <div class="sm"><svg class="i16"><use href="#chamfer"/></svg><span>倒斜角</span></div>
        <div class="sm"><svg class="i16"><use href="#trim"/></svg><span>修剪体</span></div>
        <div class="sm"><svg class="i16"><use href="#draft"/></svg><span>拔模</span></div>
      </div>
      <div class="big more"><div class="morebox"><svg class="i16"><use href="#moreF"/></svg></div><span class="lab">更多</span><i class="tri"></i></div>
    </div>
    <div class="g-foot"><span>特征</span><i class="tri"></i></div>
  </div>
  <div class="g g3">
    <div class="g-body">
      <div class="big w54"><svg class="ic32"><use href="#move"/></svg><span class="lab">移动面</span></div>
      <div class="smalls w73 tight">
        <div class="sm"><svg class="i16"><use href="#offset"/></svg><span>偏置区域</span></div>
        <div class="sm"><svg class="i16"><use href="#replace"/></svg><span>替换面</span></div>
        <div class="sm"><svg class="i16"><use href="#deleteF"/></svg><span>删除面</span></div>
      </div>
      <div class="big more"><div class="morebox"><svg class="i16"><use href="#cycle"/></svg></div><span class="lab">更多</span><i class="tri"></i></div>
    </div>
    <div class="g-foot"><span>同步建模</span><i class="tri"></i></div>
  </div>
  <div class="g g4">
    <div class="g-body"><div class="big w42"><svg class="ic32"><use href="#surface"/></svg><span class="lab">曲面</span><i class="tri"></i></div></div>
    <div class="g-foot empty"></div>
  </div>
  <div class="g g5">
    <div class="rows pl5">
      <div class="row"><div class="c"><svg class="i16"><use href="#s1"/></svg></div><div class="c"><svg class="i16"><use href="#s2"/></svg></div><div class="c"><svg class="i16"><use href="#s3"/></svg></div><i class="vsep"></i><div class="c w28"><svg class="i16"><use href="#s4"/></svg></div></div>
      <div class="row"><div class="c"><svg class="i16"><use href="#s5"/></svg></div><div class="c"><svg class="i16"><use href="#s6"/></svg></div><div class="c"><svg class="i16"><use href="#s7"/></svg></div><i class="vsep"></i><div class="c w28"><svg class="i16"><use href="#s8"/></svg></div></div>
    </div>
    <div class="g-foot left"><span>标准化工具 - G...</span><i class="tri"></i></div>
  </div>
  <div class="g g6">
    <div class="rows pl4">
      <div class="row"><div class="c w22"><svg class="i16"><use href="#s9"/></svg></div><div class="c w22"><svg class="i16"><use href="#s10"/></svg></div></div>
      <div class="row"><div class="c w22"><svg class="i16"><use href="#s11"/></svg></div></div>
    </div>
    <div class="g-foot left"><span>齿轮...</span><i class="tri"></i></div>
  </div>
  <div class="g g7">
    <div class="rows pl4">
      <div class="row"><div class="c w22"><svg class="i16"><use href="#spring"/></svg></div><div class="c w24"><svg class="i16"><use href="#spring2"/></svg></div></div>
      <div class="row"><div class="c w22"><svg class="i16"><use href="#washer"/></svg></div><i class="vsep"></i><div class="c w32"><svg class="i16"><use href="#clips"/></svg></div></div>
    </div>
    <div class="g-foot left"><span>弹簧...</span><i class="tri"></i></div>
  </div>
  <div class="g g8">
    <div class="rows pl3">
      <div class="row"><div class="c"><svg class="i16"><use href="#m1"/></svg></div><div class="c w24"><svg class="i16"><use href="#m2"/></svg></div></div>
      <div class="row"><div class="c"><svg class="i16"><use href="#m3"/></svg></div><div class="c w24"><svg class="i16"><use href="#m4"/></svg></div></div>
    </div>
    <div class="g-foot left"><span>加工...</span><i class="tri"></i></div>
  </div>
  <div class="g g9">
    <div class="rows pl3">
      <div class="row"><div class="c"><svg class="i16"><use href="#tri"/></svg></div><div class="c"><svg class="i16"><use href="#table"/></svg></div><div class="c"><svg class="i16"><use href="#folderX"/></svg></div><div class="c"><svg class="i16"><use href="#folderC"/></svg></div></div>
      <div class="row"><div class="c"><svg class="i16"><use href="#notes"/></svg></div><div class="c"><svg class="i16"><use href="#broom"/></svg></div><i class="vsep"></i><div class="c w28"><span class="binoc"><svg class="bin"><use href="#binoc"/></svg><b>10H7</b></span></div></div>
    </div>
    <div class="g-foot left"><span>建模工具 - G...</span><i class="tri"></i></div>
  </div>
  <div class="g g10">
    <div class="rows">
      <div class="row"><div class="c w28"><svg class="i16"><use href="#blocks"/></svg></div></div>
      <div class="row"><div class="c w28"><svg class="i16"><use href="#blocks"/></svg></div></div>
    </div>
    <div class="g-foot left"><span>?..</span><i class="tri"></i></div>
  </div>
  <div class="g g11">
    <div class="rows pl4">
      <div class="row">
        <div class="c"><svg class="i16"><use href="#dimS"/></svg></div><i class="vsep"></i>
        <div class="c dim"><b class="dk">1.00</b></div>
        <div class="c dim"><b class="dk">1.00</b><em>±.05</em></div>
        <div class="c dim"><b class="dk">1.00</b><em>+.05</em><em>-.02</em></div>
        <div class="c dim"><b class="dk">1.00</b><em>+.05</em><em>-.00</em></div>
        <div class="c dim"><b class="dk">1.00</b><em>+.00</em><em>-.02</em></div>
        <div class="c dim"><b class="box">1.00</b></div>
        <div class="c dim"><b class="red">(1.00)</b></div>
        <div class="c dim"><b class="blue">10H7</b></div>
        <div class="c dim"><b class="blue">10H7</b><em class="blue">[8.01]</em></div>
        <div class="c dim"><b class="blue">10H7</b><em class="blue">[8.015]</em></div>
        <div class="c dim"><b class="blue">10</b><em class="blue">[8.015]</em></div>
      </div>
      <div class="row">
        <div class="c"><svg class="i16"><use href="#r1"/></svg></div>
        <div class="c"><svg class="i16"><use href="#r2"/></svg></div><i class="vsep"></i>
        <div class="c"><svg class="i16"><use href="#d1"/></svg></div>
        <div class="c"><svg class="i16"><use href="#d1"/></svg></div>
        <div class="c"><svg class="i16"><use href="#ret"/></svg></div>
      </div>
    </div>
    <div class="g-foot center"><span>尺寸快速格式化工具 - GC工具箱</span><i class="tri"></i></div>
  </div>
  <div class="g-end"><i class="tri"></i></div>
</section>

<section class="selbar">
  <svg class="i16 ml10"><use href="#menuI"/></svg>
  <span class="menu">菜单(<u>M</u>)</span><i class="tri w8"></i>
  <i class="bar tall ml4"></i>
  <div class="sel w133 ml13"><span>没有选择过滤器</span><i class="tri"></i></div>
  <div class="sel w140 ml9"><span>仅在工作部件内</span><i class="tri"></i></div>
  <div class="c w24 ml4"><svg class="i16"><use href="#gr1"/></svg></div>
  <div class="c w25"><svg class="i16"><use href="#gr2"/></svg></div>
  <div class="c w20"><svg class="i16"><use href="#filt"/></svg></div>
  <i class="tri w14"></i>
  <div class="c w25"><svg class="i16"><use href="#undoT"/></svg></div>
  <div class="c w24"><svg class="i16"><use href="#gr3"/></svg></div>
  <div class="c w26"><svg class="i16"><use href="#rectSel"/></svg></div>
  <i class="tri w12"></i>
  <div class="c w25"><svg class="i16"><use href="#curve3d"/></svg></div>
  <div class="c w26"><svg class="i16"><use href="#cube"/></svg></div>
  <div class="sel w140 ml3"><span>体的面</span><i class="tri"></i></div>
  <div class="sel w140 ml10 off"><span>单个体</span><i class="tri"></i></div>
  <div class="c w25 ml3"><svg class="i12"><use href="#arrowB"/></svg></div>
  <div class="c w25"><svg class="i16"><use href="#gr4"/></svg></div>
  <div class="c w25"><svg class="i16"><use href="#gr5"/></svg></div>
  <div class="c w25"><svg class="i16"><use href="#gr5"/></svg></div>
  <div class="c w25"><svg class="i16"><use href="#gr6"/></svg></div>
  <div class="c w25"><svg class="i16"><use href="#gr7"/></svg></div>
  <div class="c w25"><svg class="i16"><use href="#gr8"/></svg></div>
  <div class="c w25"><svg class="i16"><use href="#gr9"/></svg></div>
  <div class="c w25"><svg class="i16"><use href="#gr10"/></svg></div>
  <div class="c w25"><svg class="i16"><use href="#gr11"/></svg></div>
  <div class="c w25"><svg class="i16"><use href="#gr5"/></svg></div>
  <div class="stack w25"><svg class="i16"><use href="#gr12"/></svg><svg class="i14"><use href="#gr13"/></svg></div>
  <i class="bar tall ml7"></i>
  <div class="c w24 ml8"><svg class="i16"><use href="#v1"/></svg></div>
  <div class="c w24"><svg class="i16"><use href="#v2"/></svg></div>
  <div class="c w25"><svg class="i16"><use href="#v3"/></svg></div>
  <div class="c w28"><svg class="i16"><use href="#v4"/></svg></div>
  <i class="tri w10"></i>
  <div class="c w24"><svg class="i16"><use href="#v5"/></svg></div>
  <i class="tri w12"></i>
  <div class="stack w26"><svg class="i16"><use href="#v6"/></svg><svg class="i16"><use href="#v7"/></svg></div>
  <div class="tri-stack w12"><i class="tri"></i><i class="tri"></i></div>
  <i class="tri sel-end"></i>
</section>

<main class="work">
  <div class="canvas">
    <svg class="scene" viewBox="0 195 1077 643" width="1077" height="643">
      <polygon points="480,610 951,610 952,647 480,651" fill="#739c6f" stroke="#6fae6c"/>
      <polygon points="416,320 1036,315 1033,376 1030,436 1027,505 1019,560 1017,627 396,631 400,545 400,512 404,440 410,408" fill="#ffd05e" stroke="#fb9f4a" stroke-width="2.500"/>
      <g fill="none" stroke="#fb9f4a" stroke-width="2">
        <path d="M404 440 L1031 436 M406 444 L1030 440"/>
        <path d="M401 497 L1028 491 M400 512 L1028 506"/>
        <path d="M525 570 L522 629 M590 570 L586 629 M594 570 L590 629 M830 568 L828 627 M834 568 L832 627 M894 568 L892 627"/>
      </g>
      <polygon points="402,498 1027,492 1027,506 401,511" fill="#ffc65a"/>
      <polygon points="469,467 943,463 945,567 475,571" fill="#9a9243"/>
      <g fill="none" stroke="#b28a3e" stroke-width="2"><path d="M470 497 L944 491 M471 511 L944 506"/><path d="M532 543 L530 570 M590 543 L588 570 M594 543 L592 570 M831 540 L829 568 M835 540 L833 568"/></g>
      <polygon points="479,275 951,272 953,318 477,322" fill="#88ba7d"/>
      <polygon points="477,322 953,318 958,373 474,380" fill="#98c264"/>
      <polygon points="474,380 945,375 943,463 469,467" fill="#c8df6c"/>
      <polygon points="951,282 958,373 945,376 947,320" fill="#7f9a50"/>
      <g fill="none" stroke="#8fb158" stroke-width="1.200"><path d="M543 322 L543 378 M602 322 L602 378 M606 322 L606 378 M845 318 L845 376 M849 318 L849 376 M479 324 L950 319"/></g>
      <polyline points="469,467 479,275 951,272 953,318" fill="none" stroke="#74b06f" stroke-width="1.200"/>
      <polygon points="530,363 572,363 587,380 854,378 863,362 900,362 904,465 527,466 530,380" fill="#97b79c" stroke="#6f9a78"/>
      <polygon points="530,380 570,380 570,392 587,407 587,410 532,406" fill="#668c68"/>
      <polygon points="572,363 587,380 587,407 570,392 570,380" fill="#7ea086" stroke="#6f9a78"/>
      <rect x="533" y="353" width="14" height="24" rx="3" fill="#6c9272" stroke="#5a8262"/>
      <ellipse cx="540" cy="354" rx="7" ry="4.500" fill="#8aac8c" stroke="#5a8262"/>
      <ellipse cx="570" cy="369" rx="5" ry="4" fill="#709474" stroke="#4c7254"/>
      <rect x="882" y="350" width="14" height="24" rx="3" fill="#6c9272" stroke="#5a8262"/>
      <ellipse cx="889" cy="349" rx="7" ry="4.500" fill="#8aac8c" stroke="#5a8262"/>
      <path d="M686 407 V395 Q686 391 692 391 H750 V407Z" fill="#668c68" stroke="#6f9a78"/>
      <path d="M586 407 H614 L615 411 H686 V407" fill="none" stroke="#5f8a66" stroke-width="1.500"/>
      <path d="M588 412 H660 V418 H596 Q590 418 590 426 V466 M584 408 Q582 420 582 466 M575 400 V466 M562 407 V466 M548 407 V466 M540 405 L537 466" fill="none" stroke="#6f9a78"/>
      <path d="M880 408 V466 M888 408 V466 M897 408 V466 M838 430 V466 M846 420 V466 M870 410 V466" fill="none" stroke="#6f9a78"/>
      <text x="576" y="460" class="mold-mark" transform="rotate(-90 576 460)">DCJ 16</text>
      <text x="862" y="460" class="mold-mark" transform="rotate(-90 862 460)">DCJ 16</text>
      <path d="M596 466 V434 Q596 423 610 423 H822 Q832 423 832 433 V465Z" fill="#c6b070" stroke="#7da07c"/>
      <path d="M532 466 L535 435 L532 436 L536 427 L540 436 L537 435 L535 466Z" fill="#d8f8c8" stroke="#6f9a78" stroke-width=".5"/>
      <path d="M894 466 L897 422 L900 422 L898 466Z" fill="#d8f8c8"/>
      <polygon points="527,466 904,464 900,503 898,540 526,540 524,500" fill="#5f6472" stroke="#2f3a33"/>
      <path d="M594 467 L832 465 L832 482 Q830 491 818 491 L790 491 L776 493 L700 493 L682 495 L604 495 Q594 494 593 484Z" fill="#965f49" stroke="#384a3e"/>
      <path d="M576 468 V490 L582 495 M578 468 L578 486 M586 467 V488 M838 466 V486 L832 493 M846 467 L840 486" fill="none" stroke="#2f3a33"/>
      <path d="M563 476 L578 497 V520 L563 503Z" fill="#565b68" stroke="#2f3a33"/>
      <path d="M678 496 H745 V503 L742 509 H682 L678 505Z" fill="#323e38" stroke="#828892"/>
      <polygon points="523,503 563,503 578,520 842,518 853,500 896,500 898,540 525,544" fill="#323e38" stroke="#2f3a33"/>
      <rect x="524" y="476" width="16" height="27" rx="3" fill="#323e38" stroke="#202a26"/>
      <ellipse cx="531" cy="476" rx="7" ry="4" fill="#2c3834" stroke="#5f6472"/>
      <rect x="878" y="474" width="15" height="27" rx="3" fill="#323e38" stroke="#202a26"/>
      <ellipse cx="885" cy="473" rx="7" ry="4" fill="#2c3834" stroke="#5f6472"/>
      <ellipse cx="855" cy="486" rx="6" ry="5" fill="#2c3834" stroke="#1f2926"/>
      <ellipse cx="580" cy="481" rx="6" ry="5" fill="#3c4844" stroke="#1f2926"/>
      <path d="M469 467 L943 463" stroke="#7cb56e" stroke-width="1.200"/>
      <path d="M469 467 L475 571 H945 L943 463" fill="none" stroke="#73a562" stroke-width=".6"/>
      <text x="698" y="421" class="axis ax-y">YC</text>
      <text x="716" y="419" class="axis ax-z">ZC</text>
      <text x="758" y="456" class="axis ax-x">XC</text>
      <path d="M712 420 L715 460 L716 424Z" fill="#4a68b0"/>
      <path d="M716 424 L717 422 L720 432 L715 460Z" fill="#cfeec0"/>
      <ellipse cx="746" cy="461" rx="25" ry="1.300" fill="#f0a0a0"/>

      <rect x="54" y="750" width="23" height="35" rx="1" fill="#d3d3d3" stroke="#bbb"/>
      <path d="M54 766 H77" stroke="#bbb" stroke-width="1.500"/>
      <text x="47" y="756" class="axis ax-z">Z</text>
      <path d="M53 757 L50 763 L56 763Z" fill="#0a3ea8"/>
      <path d="M53 760 V778" stroke="#0a3ea8" stroke-width="3"/>
      <path d="M55 781 H85" stroke="#c8302e" stroke-width="3"/>
      <path d="M84 778 L91 781 L84 783Z" fill="#c8302e"/>
      <circle cx="54" cy="782" r="4" fill="#b6b6b6"/>
      <text x="90" y="786" class="axis ax-x">X</text>
    </svg>

    <div class="dialog">
      <div class="dlg-title"><svg class="i16 gear"><use href="#gear"/></svg><span>拆分体</span><svg class="i14 dlg-reset" viewBox="0 0 16 16"><path d="M12 3.500 A6 6 0 1 1 5 3" fill="none" stroke="#fff" stroke-width="1.800"/><path d="M9 1 L13 1 L13 6Z" fill="#fff"/></svg><svg class="i12 dlg-x" viewBox="0 0 12 12"><path d="M1 1 L11 11 M11 1 L1 11" stroke="#fff" stroke-width="1.800"/></svg></div>
      <div class="dlg-sec sec1">
        <div class="sec-head"><span>目标</span><i class="chev up"></i></div>
        <div class="sec-row"><svg class="i14"><use href="#check"/></svg><span class="grow">选择体 (1)</span><div class="pick"><svg class="i22"><use href="#cubeY"/></svg></div></div>
      </div>
      <div class="dlg-sec sec2">
        <div class="sec-head"><span>工具</span><i class="chev up"></i></div>
        <div class="tool-row"><span class="grow">工具选项</span><div class="dsel"><span>面或平面</span><i class="tri"></i></div></div>
        <div class="hl-row"><div class="hl"><svg class="i14"><use href="#check"/></svg><span>选择面或平面 (20)</span></div><div class="hl-pick"><svg class="i22"><use href="#cubeW"/></svg></div></div>
      </div>
      <div class="more-arrow"><i class="tri"></i></div>
      <div class="dlg-btns"><button class="btn primary">确定</button><button class="btn">应用</button><button class="btn">取消</button></div>
    </div>

    <div class="alert">
      <div class="grip"></div>
      <div class="alert-body"><div class="alert-title">警报</div><div class="alert-msg"><svg class="i14" viewBox="0 0 16 16"><circle cx="8" cy="8" r="7.500" fill="#d80a14"/><path d="M4.500 4.500 L11.500 11.500 M11.500 4.500 L4.500 11.500" stroke="#fff" stroke-width="2.200"/></svg><span>工具和目标未形成全相交。</span></div></div>
      <div class="alert-close"><svg class="i14" viewBox="0 0 14 14"><path d="M2 2 L12 12 M12 2 L2 12" stroke="#d81018" stroke-width="3.400"/></svg></div>
    </div>
  </div>

  <aside class="panel">
    <div class="panel-head"><i class="panel-sq"></i><span>部件导航器</span></div>
    <div class="table">
      <div class="thead"><div class="th c1">名称<i class="sort"></i></div><div class="th c2">最新</div><div class="th c3">附</div></div>
      <div class="tbody">
        <i class="vline v1l"></i><i class="vline v2l"></i>
        <div class="tr"><div class="td c1"><i class="stub s1"></i><svg class="i16"><use href="#clock"/></svg><span>历史记录模式</span></div><div class="td c2"></div><div class="td c3"></div></div>
        <div class="tr alt"><div class="td c1"><i class="exp plus"></i><i class="stub s2"></i><svg class="i16"><use href="#mview"/></svg><span>模型视图</span></div><div class="td c2"></div><div class="td c3"></div></div>
        <div class="tr"><div class="td c1"><i class="exp plus"></i><i class="stub s2"></i><svg class="i13"><use href="#check"/></svg><svg class="i16 ml3"><use href="#cam"/></svg><span>摄像机</span></div><div class="td c2"></div><div class="td c3"></div></div>
        <div class="tr alt"><div class="td c1"><i class="exp minus"></i><i class="stub s2"></i><svg class="i16"><use href="#folderO"/></svg><span>模型历史记录</span></div><div class="td c2"></div><div class="td c3"></div></div>
        <div class="tr"><div class="td c1 kid"><i class="stub s3"></i><i class="cb"><svg class="i13 cbk"><use href="#check"/></svg></i><svg class="i16"><use href="#fBody"/></svg><span>体 (1)</span></div><div class="td c2"><svg class="i14"><use href="#check"/></svg></div><div class="td c3"></div></div>
        <div class="tr alt"><div class="td c1 kid"><i class="stub s3"></i><i class="cb"><svg class="i13 cbk"><use href="#check"/></svg></i><svg class="i16"><use href="#fScale"/></svg><span>缩放体 (18)</span></div><div class="td c2"><svg class="i14"><use href="#check"/></svg></div><div class="td c3"></div></div>
        <div class="tr"><div class="td c1 kid"><i class="stub s3"></i><i class="cb"><svg class="i13 cbk"><use href="#check"/></svg></i><svg class="i16"><use href="#fExt"/></svg><span>拉伸 (19)</span></div><div class="td c2"><svg class="i14"><use href="#check"/></svg></div><div class="td c3"></div></div>
        <div class="tr alt"><div class="td c1 kid"><i class="stub s3"></i><i class="cb"><svg class="i13 cbk"><use href="#check"/></svg></i><svg class="i16"><use href="#fExt"/></svg><span>拉伸 (20)</span></div><div class="td c2"><svg class="i14"><use href="#check"/></svg></div><div class="td c3"></div></div>
        <div class="tr"><div class="td c1 kid"><i class="stub s3"></i><i class="cb"><svg class="i13 cbk"><use href="#check"/></svg></i><svg class="i16"><use href="#fExt"/></svg><span>拉伸 (21)</span></div><div class="td c2"><svg class="i14"><use href="#check"/></svg></div><div class="td c3"></div></div>
        <div class="tr alt"><div class="td c1 kid"><i class="stub s3"></i><i class="cb"><svg class="i13 cbk"><use href="#check"/></svg></i><svg class="i16"><use href="#fExt"/></svg><span>拉伸 (22)</span></div><div class="td c2"><svg class="i14"><use href="#check"/></svg></div><div class="td c3"></div></div>
        <div class="tr"><div class="td c1 kid"><i class="stub s3"></i><i class="cb"><svg class="i13 cbk"><use href="#check"/></svg></i><svg class="i16"><use href="#fEx2"/></svg><span>延伸片体 (23)</span></div><div class="td c2"><svg class="i14"><use href="#check"/></svg></div><div class="td c3"></div></div>
        <div class="tr alt"><div class="td c1 kid"><i class="stub s3"></i><i class="cb"><svg class="i13 cbk"><use href="#check"/></svg></i><svg class="i16"><use href="#fSew"/></svg><span>缝合 (24)</span></div><div class="td c2"><svg class="i14"><use href="#check"/></svg></div><div class="td c3"></div></div>
        <div class="tr"><div class="td c1 kid"><i class="stub s3"></i><i class="cb"><svg class="i13 cbk"><use href="#check"/></svg></i><svg class="i16"><use href="#fSew"/></svg><span>缝合 (25)</span></div><div class="td c2"><svg class="i14"><use href="#check"/></svg></div><div class="td c3"></div></div>
        <div class="tr alt"><div class="td c1 kid"><i class="stub s3"></i><i class="cb"><svg class="i13 cbk"><use href="#check"/></svg></i><svg class="i16"><use href="#fExt"/></svg><span>拉伸 (29)</span></div><div class="td c2"><svg class="i14"><use href="#check"/></svg></div><div class="td c3"></div></div>
        <div class="tr"><div class="td c1 kid"><i class="stub s3"></i><i class="cb"><svg class="i13 cbk"><use href="#check"/></svg></i><svg class="i16"><use href="#fOff"/></svg><span>偏置区域 (30)</span></div><div class="td c2"><svg class="i14"><use href="#check"/></svg></div><div class="td c3"></div></div>
        <div class="tr alt"><div class="td c1 kid"><i class="stub s3"></i><i class="cb"><svg class="i13 cbk"><use href="#check"/></svg></i><svg class="i16"><use href="#fOff"/></svg><span class="strong">偏置区域 (31)</span></div><div class="td c2"><svg class="i14"><use href="#check"/></svg></div><div class="td c3"></div></div>
        <div class="tr"><div class="td c1"></div><div class="td c2"></div><div class="td c3"></div></div>
        <div class="tr alt"><div class="td c1"></div><div class="td c2"></div><div class="td c3"></div></div>
        <div class="tr"><div class="td c1"></div><div class="td c2"></div><div class="td c3"></div></div>
        <div class="tr alt"><div class="td c1"></div><div class="td c2"></div><div class="td c3"></div></div>
        <div class="tr"><div class="td c1"></div><div class="td c2"></div><div class="td c3"></div></div>
        <div class="tr alt"><div class="td c1"></div><div class="td c2"></div><div class="td c3"></div></div>
        <div class="tr"><div class="td c1"></div><div class="td c2"></div><div class="td c3"></div></div>
        <div class="tr alt"><div class="td c1"></div><div class="td c2"></div><div class="td c3"></div></div>
      </div>
      <div class="hscroll"><i class="sc-l"></i><div class="thumb"><i></i></div><i class="sc-r"></i></div>
    </div>
    <div class="splitter"></div>
    <div class="acc"><span>相依性</span><i class="chev"></i></div>
    <div class="acc"><span>细节</span><i class="chev"></i></div>
    <div class="acc"><span>预览</span><i class="chev"></i></div>
  </aside>

  <div class="strip">
    <div class="st h30"><svg class="i14 gear-d"><use href="#gear"/></svg></div>
    <div class="st h60 side"><svg class="i32-s"><use href="#tAsm"/></svg></div>
    <div class="st h35"><svg class="i24"><use href="#tCon"/></svg></div>
    <div class="st h45 on"><svg class="i24"><use href="#tDb"/></svg></div>
    <div class="st h45 up3"><svg class="i24"><use href="#tBooks"/></svg></div>
    <div class="st h60"><svg class="i24"><use href="#tInfo"/></svg></div>
    <div class="st h55"><svg class="i24"><use href="#tWeb"/></svg></div>
    <div class="st h45"><svg class="i22"><use href="#clock"/></svg></div>
    <div class="st h40"><svg class="i22"><use href="#tColor"/></svg></div>
    <div class="st h45"><svg class="i22"><use href="#tRobot"/></svg></div>
    <div class="st h40"><svg class="i22"><use href="#tArm"/></svg></div>
    <div class="st h40"><svg class="i22"><use href="#tBook"/></svg></div>
    <div class="thermo"><i class="th-fill"></i><i class="th-bulb"></i></div>
  </div>
</main>

<footer class="status">
  <span class="st-left">选择拆分所用的工具面或基准平面</span>
  <span class="st-mid">双击 WCS 激活动态 WCS</span>
  <div class="st-right"><svg class="i16 flag" viewBox="0 0 16 16"><rect width="16" height="16" fill="#d8d8d8"/><path d="M4 14 L5 3 L13 3 L12 10 H5" fill="#f4f4f4" stroke="#888"/><path d="M6 4H8V6H6ZM10 4H12V6H10ZM8 6H10V8H8ZM6 8H8V10H6ZM10 8H12V10H10Z" fill="#777"/></svg><svg class="i16"><use href="#frame"/></svg></div>
</footer>
<div class="taskbar">
  <i class="orb"></i>
  <div class="tasks"><i class="task t1"></i><i class="task t2"></i><i class="task t3"></i><i class="task t4"></i></div>
  <i class="showdesk"></i>
</div>

<svg class="watermark" viewBox="0 0 70 81" width="70" height="81" aria-hidden="true">
  <polygon points="35,0 70,20 70,50 48,28 35,18 15,26" fill="#a9dcf8" opacity=".55"/>
  <polygon points="0,20 35,0 48,12 18,26 18,58 0,60" fill="#8ad4f8" opacity=".7"/>
  <polygon points="70,20 70,60 50,72 50,38 32,18 50,10" fill="#8ad4f8" opacity=".75"/>
  <polygon points="0,60 18,50 35,62 50,52 70,60 35,81" fill="#72cbf6" opacity=".85"/>
  <polygon points="19,27 35,18 51,27 51,46 35,55 19,46" fill="#fff" opacity=".7"/>
  <polygon points="19,29 35,20 50,28 35,37" fill="#cfeafa"/>
  <polygon points="19,29 35,37 35,54 19,45" fill="#aadcf6"/>
  <polygon points="35,37 50,28 50,45 35,54" fill="#82cbf0"/>
</svg>
</body>
</html>
```
FILE: styles.css
```css
* { box-sizing: border-box; }
html, body { margin: 0; padding: 0; }
body {
  position: relative;
  width: 1440px;
  height: 868px;
  overflow: hidden;
  display: flex;
  flex-direction: column;
  background: #fff;
  color: #222;
  font-family: "Noto Sans CJK SC", "Noto Sans", sans-serif;
  font-size: 11px;
}
i { display: block; font-style: normal; flex: none; }
svg { display: block; flex: none; }
.defs { position: absolute; }

.i12 { width: 12px; height: 12px; }
.i13 { width: 13px; height: 13px; }
.i14 { width: 14px; height: 14px; }
.i16 { width: 16px; height: 16px; }
.i22 { width: 22px; height: 22px; }
.i24 { width: 24px; height: 24px; }
.ic32 { width: 32px; height: 32px; }

.tri {
  height: 0;
  border: 0;
  position: relative;
}
.tri::before {
  content: "";
  display: block;
  width: 0;
  height: 0;
  margin: 0 auto;
  border-left: 3.5px solid transparent;
  border-right: 3.5px solid transparent;
  border-top: 4px solid #222;
  transform: translateY(-2px);
}
.tri.up::before { border-top: 0; border-bottom: 4px solid #222; }
.tri.light::before { border-bottom-color: #c4c4c4; }
.tri.lined::after { content: ""; display: block; width: 7px; height: 1px; background: #222; margin: -8px auto 0; }

.titlebar { height: 26px; display: flex; align-items: center; background: #fff; flex: none; }
.qat { width: 672px; display: flex; align-items: center; flex: none; height: 26px; }
.q { display: flex; align-items: center; justify-content: center; flex: none; height: 26px; }
.nx { width: 41px; font: bold 24px/26px "Liberation Sans", sans-serif; color: #7f9bb0; padding-left: 4px; letter-spacing: -.5px; }
.bar { width: 1px; height: 22px; background: #cfcfcf; }
.bar.tall { height: 43px; align-self: flex-end; }
.qat-text { font-size: 11px; width: 22px; margin-left: 1px; }
.custom { width: 9px; height: 7px; border-top: 1px solid #222; margin-left: 1px; position: relative; }
.custom::after { content: ""; position: absolute; left: 1px; top: 2px; border-left: 3.5px solid transparent; border-right: 3.5px solid transparent; border-top: 4px solid #222; }
.doc-title { width: 305px; font: 13px/26px "Noto Sans", "Noto Sans CJK SC", sans-serif; white-space: nowrap; color: #111; }
.siemens { margin-left: auto; font: bold 13px/26px "Liberation Sans", sans-serif; color: #009a9b; letter-spacing: .4px; margin-right: 24px; }
.winbtns { display: flex; align-items: center; gap: 8px; margin-right: 7px; height: 16px; }
.wb-min { width: 8px; height: 2px; background: #333; margin-top: 10px; margin-left: 5px; margin-right: 3px; }
.wb-max { width: 12px; height: 11px; border: 1px solid #333; border-top-width: 2px; margin: 0 3px 0 2px; background: #fff; position: relative; }
.wb-max::before { content: ""; position: absolute; left: 2px; top: -5px; width: 10px; height: 7px; border: 1px solid #333; border-top-width: 2px; }
.wb-close { width: 12px; height: 12px; position: relative; }
.wb-close::before, .wb-close::after { content: ""; position: absolute; left: 5px; top: -1px; width: 1.500px; height: 14px; background: #333; transform: rotate(45deg); }
.wb-close::after { transform: rotate(-45deg); }

.tabs { height: 28px; display: flex; align-items: stretch; background: #c7d6d4; flex: none; }
.tab { padding: 0 13px; font-size: 13px; line-height: 27px; color: #222; }
.tab.file { width: 81px; padding: 0; text-align: center; background: #5a8980; color: #fff; margin-right: 2px; }
.tab.active { width: 52px; padding: 0; text-align: center; background: #fff; color: #2b86c5; margin-top: 1px; line-height: 26px; }
.tabs-right { margin-left: auto; display: flex; align-items: center; }
.search { width: 125px; height: 18px; background: #fff; border: 1px solid #a8a8a8; display: flex; align-items: center; justify-content: space-between; padding: 0 1px 0 2px; line-height: 16px; margin-right: 11px; }
.fr-top { margin-right: 12px; }
.tb-ic { margin-right: 12px; }
.winbtns.inner { margin-right: 9px; gap: 7px; }
.winbtns.inner .wb-min { margin-left: 0; margin-right: 0; }
.winbtns.inner .wb-max, .winbtns.inner .wb-max::before { border-color: #111; }
.winbtns.inner .wb-close::before, .winbtns.inner .wb-close::after { background: #111; width: 2px; }

.ribbon { height: 94px; display: flex; flex: none; background: #fff; border-bottom: 2px solid #dedede; padding-top: 5px; }
.g { display: flex; flex-direction: column; height: 84px; border-right: 1px solid #d9d9d9; flex: none; }
.g1 { width: 145px; } .g2 { width: 369px; padding-left: 6px; } .g3 { width: 172px; } .g4 { width: 43px; }
.g5 { width: 104px; } .g6 { width: 52px; } .g7 { width: 58px; } .g8 { width: 52px; } .g9 { width: 98px; }
.g10 { width: 29px; } .g11 { width: 288px; }
.g-body { flex: 1; display: flex; align-items: flex-start; min-height: 0; }
.g-foot { height: 20px; display: flex; align-items: center; justify-content: center; color: #3a9bd0; font-size: 11px; position: relative; white-space: nowrap; padding-top: 9px; flex: none; }
.g-foot .tri { position: absolute; right: 7px; top: 14px; width: 7px; }
.g-foot.left { justify-content: flex-start; padding-left: 1px; }
.g-foot.center { padding-right: 22px; }
.g-foot.empty { visibility: hidden; }
.g-end { flex: 1; position: relative; }
.g-end .tri { position: absolute; right: 5px; top: 79px; width: 7px; }

.big { display: flex; flex-direction: column; align-items: center; flex: none; height: 64px; }
.big .lab { margin-top: 4px; font-size: 11px; line-height: 16px; white-space: nowrap; }
.big .tri { margin-top: 6px; width: 100%; }
.big > svg { overflow: visible; }
.big.more { width: 38px; margin-left: 3px; }
.morebox { width: 38px; height: 32px; border: 1px solid #eaeaea; border-radius: 3px; display: flex; align-items: center; justify-content: center; }
.gallery { width: 66px; height: 66px; border: 1px solid #ddd; display: grid; grid-template-columns: 1fr 1fr; place-items: center; padding: 3px; }
.gal-nav { width: 21px; display: flex; flex-direction: column; align-items: center; height: 66px; padding: 10px 0 0 0; gap: 20px; }
.gal-nav .tri { width: 9px; }
.smalls { display: flex; flex-direction: column; padding-left: 7px; flex: none; height: 66px; margin-top: -4px; }
.smalls.col-a { padding-left: 6px; }
.smalls.col-b { padding-left: 5px; }
.smalls.tight { padding-left: 0; margin-left: -1px; }
.sm { height: 22px; display: flex; align-items: center; white-space: nowrap; }
.sm svg { margin-right: 5px; }
.sm .tri { width: 13px; margin-left: 5px; }

.rows { flex: 1; display: flex; flex-direction: column; padding-top: 1px; }
.pl3 { padding-left: 3px; } .pl4 { padding-left: 4px; } .pl5 { padding-left: 5px; }
.row { height: 30px; display: flex; align-items: center; }
.c { width: 23px; height: 30px; display: flex; align-items: center; justify-content: center; flex: none; }
.vsep { width: 1px; height: 18px; background: #d8d8d8; }
.g11 .vsep { margin: 0 2px 0 3px; }
.dim { flex-direction: column; font: 8.5px/9px "Liberation Sans", sans-serif; color: #333; white-space: nowrap; }
.dim b { font-weight: normal; }
.dim em { font-style: normal; font-size: 6px; line-height: 5.500px; color: #a83c3c; font-weight: bold; }
.dim em.blue, .dim .blue { color: #3a3ac8; }
.dim .box { border: 1.500px solid #b02020; padding: 1px 1.500px; color: #333; }
.dim .red { color: #a83c3c; }
.binoc { display: flex; flex-direction: column; align-items: center; font: 8px/8px "Liberation Sans", sans-serif; color: #333; }
.binoc .bin { width: 14px; height: 9px; }
.binoc b { color: #333; }

.selbar { height: 47px; display: flex; align-items: center; flex: none; background: #fff; white-space: nowrap; }
.menu { margin-left: 3px; width: 44px; font-size: 11px; }
.sel { height: 20px; border: 1px solid #a8a8a8; background: #fff; display: flex; align-items: center; justify-content: space-between; padding: 0 7px 0 2px; flex: none; font-size: 11px; }
.sel .tri { width: 9px; }
.sel .tri::before { border-left-width: 4px; border-right-width: 4px; }
.sel.off { color: #a2a2a2; }
.sel.off .tri::before { border-top-color: #aaa; }
.stack { display: flex; flex-direction: column; align-items: center; gap: 6px; flex: none; }
.tri-stack { display: flex; flex-direction: column; gap: 22px; flex: none; }
.sel-end { margin-left: auto; width: 9px; margin-right: 4px; margin-top: 12px; }

.work { flex: 1; display: flex; min-height: 0; }
.canvas { width: 1077px; height: 643px; flex: none; position: relative; overflow: hidden; background: linear-gradient(#b4b5b7 0, #c4c5c7 80px, #e3e4e6 470px, #e6e7e9 100%); border-top: 1px solid #8f9294; }
.scene { position: absolute; left: 0; top: -1px; }
.mold-mark { font: bold 9px "Liberation Sans", sans-serif; fill: #5a8262; }
.axis { font: 12px "Liberation Sans", sans-serif; }
.ax-y { fill: #4a9a5a; } .ax-z { fill: #1f56d8; } .ax-x { fill: #dd5050; }

.dialog { position: absolute; left: 23px; top: 0; width: 328px; height: 261px; background: #e6e6e6; border: 1px solid #b5b5b5; border-top: 0; display: flex; flex-direction: column; }
.dlg-title { height: 24px; background: #5c8a80; margin: 0 -1px; display: flex; align-items: center; color: #fff; font-size: 12px; padding: 0 0 2px 8px; flex: none; }
.dlg-title .gear { color: #fff; margin-right: 8px; }
.dlg-title span { flex: 1; }
.dlg-reset { margin-right: 8px; }
.dlg-x { margin-right: 10px; }
.dlg-sec { margin: 4px 5px 0; background: #fff; border-bottom: 1px solid #c9c9c9; flex: none; padding: 0 8px 0 7px; }
.sec1 { height: 70px; } .sec2 { height: 97px; }
.sec-head { height: 24px; display: flex; align-items: center; justify-content: space-between; color: #2f84bd; font-size: 13px; padding-bottom: 2px; }
.chev { width: 10px; height: 10px; position: relative; flex: none; }
.chev::before { content: ""; position: absolute; left: 1.500px; top: -1px; width: 7px; height: 7px; border-right: 2px solid #2580b8; border-bottom: 2px solid #2580b8; transform: rotate(45deg); }
.chev.up::before { transform: rotate(225deg); top: 3px; }
.sec-row { display: flex; align-items: center; height: 33px; margin-top: 5px; gap: 4px; padding-left: 3px; font-size: 12px; }
.grow { flex: 1; }
.pick { width: 32px; height: 32px; border: 1px solid #8e8e8e; display: flex; align-items: center; justify-content: center; }
.tool-row { display: flex; align-items: center; height: 25px; margin-top: 5px; font-size: 12px; padding-left: 2px; }
.dsel { width: 141px; height: 25px; border: 1px solid #8e8e8e; display: flex; align-items: center; justify-content: space-between; padding: 0 4px; background: #fff; }
.dsel .tri { width: 10px; }
.hl-row { display: flex; margin-top: 2px; height: 32px; gap: 2px; }
.hl { flex: 1; background: #fbd46b; display: flex; align-items: center; gap: 4px; padding-left: 3px; font-size: 12px; }
.hl-pick { width: 32px; height: 32px; background: #fbe9ac; border: 1px solid #f3cf6e; display: flex; align-items: center; justify-content: center; }
.more-arrow { height: 16px; display: flex; align-items: center; justify-content: center; flex: none; border-bottom: 1px solid #cfcfcf; margin: 0 5px; padding-top: 2px; }
.more-arrow .tri { width: 9px; }
.more-arrow .tri::before { border-left-width: 4px; border-right-width: 4px; }
.dlg-btns { display: flex; justify-content: flex-end; gap: 5px; padding: 9px 15px 0 0; }
.btn { width: 54px; height: 24px; font: 12px "Noto Sans CJK SC", sans-serif; background: #c7c8cb; border: 1px solid #a3a5a8; padding: 0; color: #222; }
.btn.primary { background: #9accE8; border-color: #4d9ed1; }

.alert { position: absolute; left: 754px; top: 182px; width: 234px; height: 56px; background: #eff4f6; border: 1px solid #b5babd; display: flex; align-items: flex-start; padding-top: 4px; }
.grip { height: 46px; margin-left: 2px; background-image: radial-gradient(circle, #bcbcbc 1px, transparent 1.200px); background-size: 3px 4px; width: 7px; margin-right: 9px; }
.alert-body { width: 181px; height: 45px; background: #fff; box-shadow: 0 1px 0 #c4c4c4; padding-left: 7px; }
.alert-title { color: #2f8ac0; font-size: 13px; line-height: 19px; padding-left: 1px; }
.alert-msg { display: flex; align-items: center; font-size: 12px; color: #222; line-height: 20px; margin-top: 0; margin-left: -3px; }
.alert-msg span { margin-left: 12px; white-space: nowrap; }
.alert-close { width: 24px; height: 24px; border: 1px solid #b8b8b8; background: #f4f6f7; display: flex; align-items: center; justify-content: center; margin-left: 7px; }

.panel { width: 330px; height: 643px; flex: none; background: #fff; border-left: 1px solid #bdbdbd; border-top: 1px solid #8f9294; display: flex; flex-direction: column; font-size: 12px; }
.panel-head { height: 29px; display: flex; align-items: center; padding: 0 0 1px 11px; flex: none; }
.panel-sq { width: 12px; height: 12px; border: 1px solid #333; border-top-width: 2px; margin-right: 11px; }
.table { width: 315px; height: 529px; margin-left: 9px; border: 1px solid #dcdcdc; display: flex; flex-direction: column; flex: none; }
.thead { height: 21px; display: flex; background: #f0f0f0; border-bottom: 1px solid #ccc; flex: none; }
.th { line-height: 20px; padding-left: 6px; border-right: 1px solid #d8d8d8; position: relative; white-space: nowrap; overflow: hidden; }
.c1 { width: 200px; flex: none; } .c2 { width: 100px; flex: none; } .c3 { width: 13px; flex: none; }
.th.c3 { border-right: 0; padding-left: 6px; }
.sort { position: absolute; left: 48px; top: 8px; border-left: 4.500px solid transparent; border-right: 4.500px solid transparent; border-bottom: 4px solid #222; }
.tbody { flex: 1; position: relative; overflow: hidden; }
.tr { height: 20px; display: flex; background: #fff; border-bottom: 1px solid #efefef; }
.tr.alt { background: #fafafa; }
.td { height: 19px; border-right: 1px solid #ececec; display: flex; align-items: center; position: relative; white-space: nowrap; line-height: 19px; }
.td.c1 { padding-left: 19px; color: #333; }
.td.c1 > span { margin-left: 3px; }
.td.c2 { padding-left: 6px; }
.td.c3 { border-right: 0; }
.td.kid { padding-left: 40px; }
.td.kid > span { margin-left: 3px; }
.td.kid .cb { margin-right: 2px; }
.strong { font-weight: bold; }
.stub { position: absolute; top: 9px; height: 1px; border-top: 1px dotted #888; }
.stub.s1 { left: 9px; width: 9px; }
.stub.s2 { left: 14px; width: 5px; }
.stub.s3 { left: 28px; width: 11px; }
.vline { position: absolute; width: 1px; border-left: 1px dotted #888; }
.v1l { left: 9px; top: 9px; height: 60px; }
.v2l { left: 28px; top: 70px; height: 240px; }
.exp { position: absolute; left: 5px; top: 5px; width: 9px; height: 9px; border: 1px solid #b8b8b8; background: #fff; z-index: 1; }
.exp::before { content: ""; position: absolute; left: 1px; top: 3px; width: 5px; height: 1px; background: #111; }
.exp.plus::after { content: ""; position: absolute; left: 3px; top: 1px; width: 1px; height: 5px; background: #111; }
.cb { width: 12px; height: 12px; border: 1px solid #111; background: #fff; position: relative; flex: none; }
.cbk { position: absolute; left: -1px; top: -1px; width: 13px; height: 12px; }
.hscroll { height: 16px; display: flex; align-items: center; background: #f0f0f0; flex: none; position: relative; padding: 0 5px; margin: 0 0 1px; }
.sc-l { width: 0; height: 0; border-top: 4px solid transparent; border-bottom: 4px solid transparent; border-right: 4px solid #333; margin-right: 7px; margin-left: 2px; }
.sc-r { width: 0; height: 0; border-top: 4px solid transparent; border-bottom: 4px solid transparent; border-left: 4px solid #333; margin-left: auto; margin-right: 2px; }
.thumb { width: 213px; height: 14px; border: 1px solid #909090; border-radius: 2px; background: linear-gradient(#f0f0f0, #d8d8d8 45%, #c6c6c6 55%, #dcdcdc); display: flex; align-items: center; justify-content: center; }
.thumb i { width: 7px; height: 7px; border-left: 1px solid #555; border-right: 1px solid #555; background: linear-gradient(90deg, transparent 2px, #555 2px, #555 3px, transparent 3px); }
.splitter { height: 5px; margin: 1px 4px 0 8px; background: #dcdcdc; border: 1px solid #b8b8b8; flex: none; }
.acc { height: 24px; margin: 0 4px 0 8px; border-bottom: 2px solid #d5d5d5; display: flex; align-items: center; justify-content: space-between; color: #2f8ac8; font-size: 13.500px; padding: 2px 6px 0 7px; flex: none; }
.acc .chev::before { top: -3px; }
.acc .chev { width: 12px; }

.strip { width: 33px; height: 643px; flex: none; background: #d5d5d5; border-left: 1px solid #a9a9a9; border-top: 1px solid #8f9294; display: flex; flex-direction: column; position: relative; }
.st { display: flex; align-items: center; justify-content: center; width: 30px; flex: none; }
.h30 { height: 29px; } .h35 { height: 35px; } .h40 { height: 40px; } .h45 { height: 45px; } .h55 { height: 55px; } .h60 { height: 60px; }
.st.on { background: #fff; border: 1px solid #b5b5b5; border-left: 0; }
.up3 { padding-bottom: 6px; }
.gear-d { color: #333; }
.i32-s { width: 24px; height: 28px; }
.side { justify-content: flex-start; padding-left: 2px; }
.thermo { position: absolute; left: 22px; top: 29px; width: 9px; height: 55px; background: #e8e8e8; border: 1px solid #999; border-radius: 4px 4px 0 0; }
.th-fill { position: absolute; left: 2px; top: 17px; width: 3px; height: 32px; background: #2e9ad8; }
.th-bulb { position: absolute; left: -2px; top: 43px; width: 11px; height: 11px; background: #2e9ad8; border: 1px solid #555; border-radius: 50%; }

.status { height: 22px; flex: none; background: #fff; border-top: 1px solid #b2b2b2; display: flex; align-items: center; position: relative; font-size: 11px; padding-bottom: 3px; }
.st-left { font-size: 11px; padding-left: 3px; width: 666px; font-weight: 500; color: #222; }
.st-mid { font-weight: bold; color: #222; letter-spacing: .4px; }
.st-right { margin-left: auto; display: flex; gap: 5px; margin-right: 55px; }
.flag { opacity: .9; }
.taskbar { height: 8px; flex: none; background: linear-gradient(#1d6aa6, #134a7e); border-top: 1px solid #0d2b47; display: flex; position: relative; overflow: hidden; }
.orb { width: 34px; height: 34px; border-radius: 50%; background: #d7e6f2; border: 2px solid #7aa0c0; margin: 1px 0 0 10px; }
.tasks { display: flex; gap: 4px; margin-left: 93px; }
.task { width: 58px; height: 10px; background: linear-gradient(#cde4f2, #7fb8da); border-radius: 3px 3px 0 0; position: relative; }
.task::after { content: ""; position: absolute; left: 22px; top: 1px; width: 14px; height: 14px; border-radius: 50%; background: #f2f6f8; }
.task.t2::after { background: #e84a5a; border-radius: 2px; }
.task.t3::after { background: #b8b8b8; }
.task.t4::after { background: #3aa838; }
.showdesk { margin-left: auto; width: 13px; height: 8px; background: #7a8b9a; border: 1px solid #c4ccd4; }
.watermark { position: absolute; left: 1158px; top: 774px; opacity: .9; }

.w8 { width: 8px; } .w10 { width: 10px; } .w11 { width: 11px; } .w12 { width: 12px; } .w14 { width: 14px; }
.w20 { width: 20px; } .w22 { width: 22px; } .w24 { width: 24px; }
.w25 { width: 25px; } .w26 { width: 26px; } .w27 { width: 27px; } .w28 { width: 28px; } .w31 { width: 31px; } .w32 { width: 32px; }
.w36 { width: 36px; } .w40 { width: 40px; } .w42 { width: 42px; } .w54 { width: 54px; }
.w56 { width: 56px; } .w57 { width: 57px; } .w66 { width: 66px; } .w73 { width: 73px; }
.w77 { width: 77px; } .w133 { width: 133px; } .w140 { width: 140px; }
.ml3 { margin-left: 3px; } .ml4 { margin-left: 4px; } .ml7 { margin-left: 7px; }
.ml8 { margin-left: 8px; } .ml9 { margin-left: 9px; } .ml10 { margin-left: 10px; } .ml13 { margin-left: 13px; }
```
